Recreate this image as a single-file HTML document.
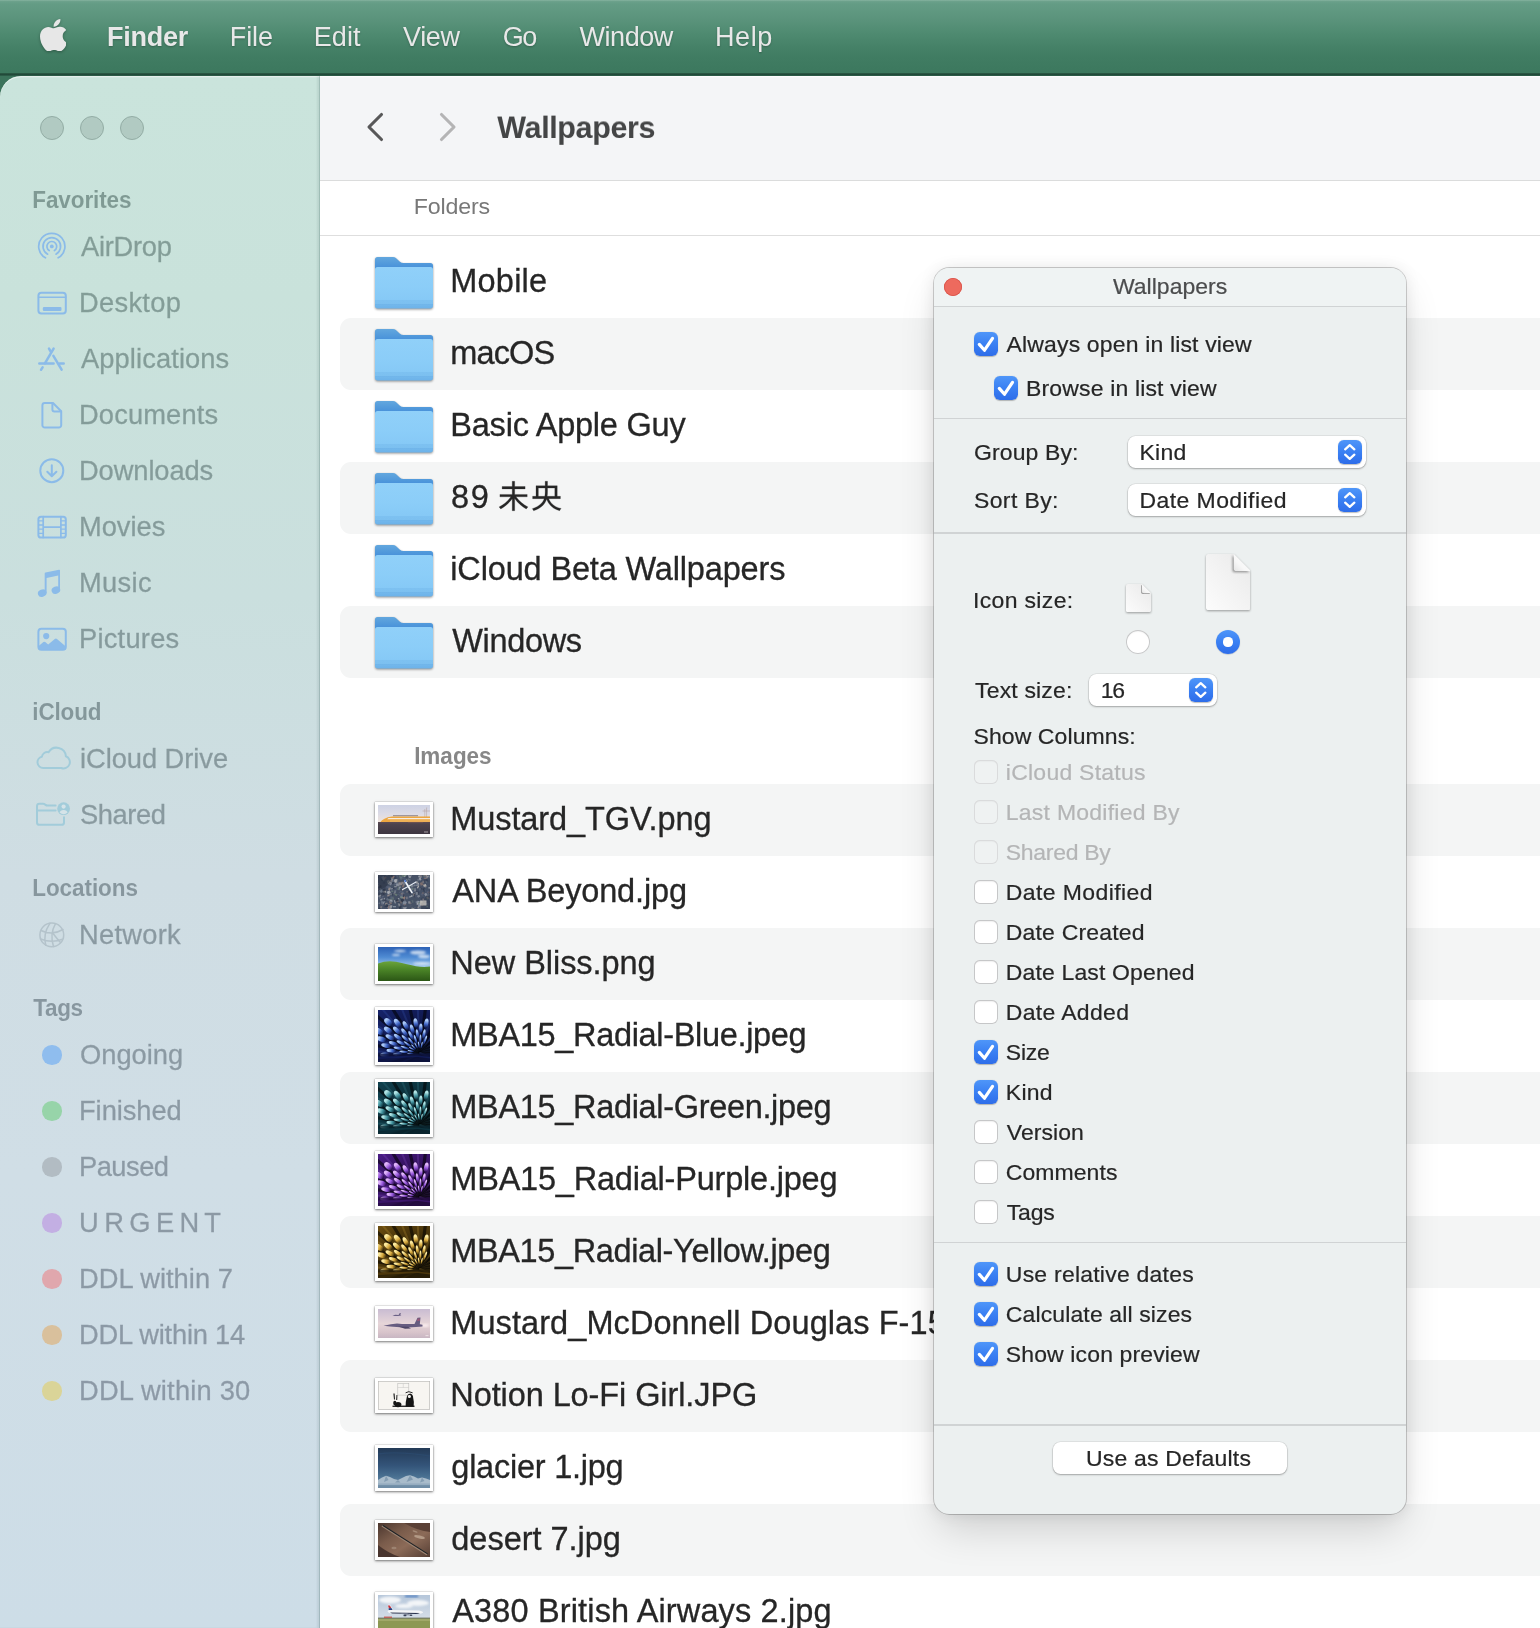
<!DOCTYPE html>
<html><head><meta charset="utf-8"><title>Finder</title><style>
*{box-sizing:border-box;margin:0;padding:0}
html,body{width:1540px;height:1628px;overflow:hidden;background:#3b735b}
#root{position:absolute;left:0;top:0;width:1540px;height:1628px;will-change:transform}
body{position:relative;font-family:"Liberation Sans",sans-serif;-webkit-font-smoothing:antialiased}
.a{position:absolute}
.t{position:absolute;white-space:nowrap;line-height:1;font-family:"Liberation Sans",sans-serif}
#menubar{left:0;top:0;width:1540px;height:75.5px;background:linear-gradient(180deg,#86b3a0 0px,#6aa08a 1.6px,#649c85 4px,#5a937b 20px,#4e8a70 34px,#468268 46px,#407c62 58px,#3c785e 72.6px,#2a5743 73.4px,#214839 74.6px,#2b5a46 75.5px)}
#sidebar{left:0;top:76px;width:320px;height:1552px;border-top-left-radius:21px;
 background:linear-gradient(180deg,#cae4dc 0px,#c9e2db 220px,#cadfde 520px,#cfdde3 800px,#d0dee6 1100px,#cddde7 1552px);
 box-shadow:inset -1px 0 0 rgba(0,45,40,.15), inset -3px 0 2px rgba(0,45,40,.07), inset 0 1.2px 0 rgba(255,255,255,.55)}
#sbtop{left:0;top:76px;width:320px;height:2px;border-top-left-radius:21px;background:rgba(255,255,255,.0)}
#toolbar{left:320px;top:76px;width:1220px;height:105px;background:#f4f5f7;border-bottom:1px solid #dbdcdc;box-shadow:inset 0 1.2px 0 rgba(255,255,255,.8)}
#content{left:320px;top:181px;width:1220px;height:1447px;background:#fff}
#hdrline{left:320px;top:235px;width:1220px;height:1px;background:#dedede}
.stripe{position:absolute;left:340px;width:1230px;height:72px;background:#f4f5f5;border-radius:11px}
.wb{position:absolute;top:116px;width:24px;height:24px;border-radius:50%;background:#b1cac2;border:1px solid #93ada5}
.dot{position:absolute;left:42px;width:19.5px;height:19.5px;border-radius:50%}

#panel{left:934.3px;top:267.8px;width:472.2px;height:1246.2px;border-radius:15.5px;background:#ecf0f0;
 box-shadow:0 0 0 .9px rgba(0,0,0,.2),0 20px 40px -6px rgba(0,0,0,.16),0 0 16px rgba(0,0,0,.085)}
#ptitle{left:934.3px;top:267.8px;width:472.2px;height:38.4px;border-radius:15.5px 15.5px 0 0;background:#eff3f3}
.sep{position:absolute;left:934.3px;width:472.2px;height:1.3px;background:#d0d3d4}
.cb{position:absolute;width:24px;height:24px;border-radius:5.8px}
.cb.on{background:linear-gradient(180deg,#4f96f9 0%,#3a80f3 50%,#2e6de9 100%);box-shadow:0 .5px 1px rgba(0,0,0,.25)}
.cb.off{background:#fff;box-shadow:inset 0 0 0 1px #c6c7c8,inset 0 1.5px 1.5px rgba(0,0,0,.10)}
.cb.dis{background:#eff2f2;box-shadow:inset 0 0 0 1px #dadbdc,inset 0 1.5px 1.5px rgba(0,0,0,.05)}
.dd{position:absolute;height:32px;border-radius:7.5px;background:#fff;box-shadow:0 0 0 .6px rgba(0,0,0,.10),0 1px 2px rgba(0,0,0,.28)}
.st{position:absolute;width:23.5px;height:24px;border-radius:5.8px;background:linear-gradient(180deg,#4f96f9 0%,#3a80f3 50%,#2e6de9 100%);box-shadow:0 .5px 1px rgba(0,0,0,.25)}
.rd{position:absolute;width:24px;height:24px;border-radius:50%}
</style></head>
<body>
<div id="root">
<div class="a" id="menubar"></div>
<svg class="a" style="left:39.5px;top:18.6px;filter:drop-shadow(0 1px 1.5px rgba(0,0,0,.3))" width="26.5" height="32.5" viewBox="4 32 367.4 448"><path fill="#e7e7e7" d="M318.7 268.7c-.2-36.700 16.400-64.400 50-84.800-18.800-26.900-47.200-41.700-84.700-44.600-35.500-2.800-74.300 20.700-88.500 20.700-15 0-49.400-19.700-76.400-19.700C63.300 141.200 4 184.800 4 273.500q0 39.300 14.400 81.200c12.800 36.700 59 126.700 107.200 125.200 25.200-.6 43-17.900 75.800-17.900 31.800 0 48.300 17.900 76.400 17.900 48.600-.7 90.400-82.500 102.600-119.300-65.200-30.700-61.700-90-61.700-91.900zm-56.600-164.200c27.300-32.400 24.800-61.900 24-72.500-24.100 1.400-52 16.400-67.900 34.900-17.500 19.800-27.800 44.300-25.600 71.900 26.100 2 49.900-11.400 69.500-34.300z"/></svg>
<div class="a" id="sidebar"></div>
<div class="a" id="toolbar"></div>
<div class="a" id="content"></div>
<div class="a" id="hdrline"></div>
<div class="wb" style="left:40px"></div>
<div class="wb" style="left:80px"></div>
<div class="wb" style="left:120px"></div>
<svg class="a" style="left:360px;top:106px" width="30" height="42" viewBox="0 0 30 42"><path d="M21.5 8.5 L9 21 L21.5 33.5" fill="none" stroke="#585859" stroke-width="3.1" stroke-linecap="round" stroke-linejoin="round"/></svg>
<svg class="a" style="left:433px;top:106px" width="30" height="42" viewBox="0 0 30 42"><path d="M8.5 8.5 L21 21 L8.5 33.5" fill="none" stroke="#b4b4b5" stroke-width="3.1" stroke-linecap="round" stroke-linejoin="round"/></svg>
<div class="stripe" style="top:318px"></div>
<div class="stripe" style="top:462px"></div>
<div class="stripe" style="top:606px"></div>
<div class="stripe" style="top:784px"></div>
<div class="stripe" style="top:928px"></div>
<div class="stripe" style="top:1072px"></div>
<div class="stripe" style="top:1216px"></div>
<div class="stripe" style="top:1360px"></div>
<div class="stripe" style="top:1504px"></div>
<div class="dot" style="top:1045.2px;background:#8fbdee"></div>
<div class="dot" style="top:1101.2px;background:#97d4a9"></div>
<div class="dot" style="top:1157.2px;background:#b2bcc3"></div>
<div class="dot" style="top:1213.2px;background:#c3afe3"></div>
<div class="dot" style="top:1269.2px;background:#e0a7ad"></div>
<div class="dot" style="top:1325.2px;background:#d9c09c"></div>
<div class="dot" style="top:1381.2px;background:#dad498"></div>
<svg class="a" style="left:0;top:0" width="320" height="1628" viewBox="0 0 320 1628" fill="none" stroke-linecap="round" stroke-linejoin="round">
<g stroke="#8bbbe9" stroke-width="1.7"><path d="M45.45 257.86 A13.10 13.10 0 1 1 58.15 257.86"/><path d="M47.67 254.17 A8.80 8.80 0 1 1 55.93 254.17"/><path d="M49.20 250.56 A4.90 4.90 0 1 1 54.40 250.56"/></g>
<circle cx="51.8" cy="246.4" r="1.9" fill="#8bbbe9"/>
<g stroke="#8bbbe9"><rect x="38.4" y="292.8" width="27.4" height="20.8" rx="3" stroke-width="2"/><path d="M38.6 297.3H65.6" stroke-width="1.5"/></g>
<rect x="42.8" y="306.9" width="18.7" height="4.1" rx="1.2" fill="#8bbbe9"/>
<g stroke="#8bbbe9" stroke-width="2.5"><path d="M39.3 363.6H53.6M59.6 363.6H63.7"/><path d="M53.6 348.6L44.9 363.3M42.6 367.3L41 369.8"/><path d="M49 348.6L51 352M53.4 355.9L61.6 369.6"/></g>
<g stroke="#8bbbe9" stroke-width="2"><path d="M44.8 403H53L61.2 411.2V425.2A2.4 2.4 0 0 1 58.8 427.6H44.8A2.4 2.4 0 0 1 42.4 425.2V405.4A2.4 2.4 0 0 1 44.8 403Z"/><path d="M52.4 403.3V409.4A2 2 0 0 0 54.4 411.4H61"/></g>
<g stroke="#8bbbe9" stroke-width="2"><circle cx="51.8" cy="470.7" r="11.5"/><path d="M51.8 465.2V476M47.3 471.7L51.8 476.3L56.4 471.7"/></g>
<g stroke="#8bbbe9"><rect x="38.4" y="516.7" width="27.4" height="20.8" rx="2.6" stroke-width="2"/><path d="M43.2 516.7V537.5M60.9 516.7V537.5M43.2 527.1H60.9" stroke-width="1.7"/><path d="M38.6 520.9H43M38.6 525H43M38.6 529.2H43M38.6 533.3H43M61 520.9H65.5M61 525H65.5M61 529.2H65.5M61 533.3H65.5" stroke-width="1.3"/></g>
<g fill="#8bbbe9" stroke="none"><ellipse cx="42.2" cy="593.2" rx="4.4" ry="3.6" transform="rotate(-22 42.2 593.2)"/><ellipse cx="55.9" cy="590.2" rx="4.4" ry="3.6" transform="rotate(-22 55.9 590.2)"/><path d="M44.7 573.4Q44.7 572.6 45.5 572.4L59 569.7Q60 569.5 60 570.5V590.4H58.2V575.5L46.6 577.9V593.2H44.7Z"/></g>
<rect x="38.4" y="628.7" width="27.4" height="21.1" rx="3" stroke="#8bbbe9" stroke-width="2"/>
<g fill="#8bbbe9" stroke="none"><circle cx="46.2" cy="636.1" r="3.1"/><path d="M38.4 646.3L43.4 642Q44.3 641.3 45.2 642L48.2 644.6L54.8 638.9Q55.9 638 57 638.9L65.8 646.4V648.5Q65.8 649.8 64.5 649.8H39.7Q38.4 649.8 38.4 648.5Z"/></g>
<path stroke="#a2ccda" stroke-width="2" d="M43.2 768A5.7 5.7 0 0 1 41.9 756.75A5.3 5.3 0 0 1 48.6 752.3A9.3 9.3 0 0 1 65.9 756.3A6 6 0 0 1 61.2 768Z"/>
<g stroke="#a2ccda" stroke-width="2"><path d="M55.6 805.6H47.5Q46.4 805.6 45.5 804.9L44.6 804.2Q44 803.8 43 803.8H39.4A2.4 2.4 0 0 0 37 806.2V822.4A2.4 2.4 0 0 0 39.4 824.8H61.6A2.4 2.4 0 0 0 64 822.4V817.2"/><path d="M37.2 810.6H55.6"/></g>
<circle cx="63.6" cy="808.7" r="6.4" fill="#a2ccda"/>
<g fill="#d5e3e8"><circle cx="63.6" cy="806.6" r="2.1"/><path d="M59.6 812.6Q60.3 809.9 63.6 809.9Q66.9 809.9 67.6 812.6Q65.8 814.2 63.6 814.2Q61.4 814.2 59.6 812.6Z"/></g>
<g stroke="#b4c3cb" stroke-width="1.5"><circle cx="51.8" cy="934.9" r="11.9"/><path d="M55.5 923.6Q49.5 934 53.5 946.6M50 923.2Q42.5 934.5 45.8 945.2M41 930.5Q52 936 63 929.5M40.5 939Q52 943.5 62.5 939.2M53.5 934Q58 940 60.5 942.5"/></g>
</svg>
<svg width="0" height="0" style="position:absolute"><defs>
<linearGradient id="fb" x1="0" y1="0" x2="0" y2="1"><stop offset="0" stop-color="#62a7de"/><stop offset="0.45" stop-color="#4a93da"/><stop offset="1" stop-color="#3a80d0"/></linearGradient>
<linearGradient id="ff" x1="0" y1="0" x2="0" y2="1"><stop offset="0" stop-color="#90d0f9"/><stop offset="0.5" stop-color="#8bcdf8"/><stop offset="0.79" stop-color="#86c9f6"/><stop offset="0.8" stop-color="#7dc1f1"/><stop offset="0.89" stop-color="#7cc0f0"/><stop offset="0.9" stop-color="#6db2e8"/><stop offset="0.91" stop-color="#73b8ec"/><stop offset="1" stop-color="#6cb2e9"/></linearGradient>
</defs></svg>
<svg class="a" style="left:375px;top:257px;filter:drop-shadow(0 1px 1.2px rgba(0,0,0,.42))" width="58" height="52" viewBox="0 0 58 52"><path fill="url(#fb)" d="M0 2.6Q0 0 2.6 0H18Q19.6 0 20.9 1.1L24.6 4.6Q26.3 6.1 28.6 6.1H55.4Q58 6.1 58 8.7V22H0Z"/><rect x="0" y="10.1" width="58" height="41.3" rx="2.6" fill="url(#ff)"/></svg>
<svg class="a" style="left:375px;top:329px;filter:drop-shadow(0 1px 1.2px rgba(0,0,0,.42))" width="58" height="52" viewBox="0 0 58 52"><path fill="url(#fb)" d="M0 2.6Q0 0 2.6 0H18Q19.6 0 20.9 1.1L24.6 4.6Q26.3 6.1 28.6 6.1H55.4Q58 6.1 58 8.7V22H0Z"/><rect x="0" y="10.1" width="58" height="41.3" rx="2.6" fill="url(#ff)"/></svg>
<svg class="a" style="left:375px;top:401px;filter:drop-shadow(0 1px 1.2px rgba(0,0,0,.42))" width="58" height="52" viewBox="0 0 58 52"><path fill="url(#fb)" d="M0 2.6Q0 0 2.6 0H18Q19.6 0 20.9 1.1L24.6 4.6Q26.3 6.1 28.6 6.1H55.4Q58 6.1 58 8.7V22H0Z"/><rect x="0" y="10.1" width="58" height="41.3" rx="2.6" fill="url(#ff)"/></svg>
<svg class="a" style="left:375px;top:473px;filter:drop-shadow(0 1px 1.2px rgba(0,0,0,.42))" width="58" height="52" viewBox="0 0 58 52"><path fill="url(#fb)" d="M0 2.6Q0 0 2.6 0H18Q19.6 0 20.9 1.1L24.6 4.6Q26.3 6.1 28.6 6.1H55.4Q58 6.1 58 8.7V22H0Z"/><rect x="0" y="10.1" width="58" height="41.3" rx="2.6" fill="url(#ff)"/></svg>
<svg class="a" style="left:375px;top:545px;filter:drop-shadow(0 1px 1.2px rgba(0,0,0,.42))" width="58" height="52" viewBox="0 0 58 52"><path fill="url(#fb)" d="M0 2.6Q0 0 2.6 0H18Q19.6 0 20.9 1.1L24.6 4.6Q26.3 6.1 28.6 6.1H55.4Q58 6.1 58 8.7V22H0Z"/><rect x="0" y="10.1" width="58" height="41.3" rx="2.6" fill="url(#ff)"/></svg>
<svg class="a" style="left:375px;top:617px;filter:drop-shadow(0 1px 1.2px rgba(0,0,0,.42))" width="58" height="52" viewBox="0 0 58 52"><path fill="url(#fb)" d="M0 2.6Q0 0 2.6 0H18Q19.6 0 20.9 1.1L24.6 4.6Q26.3 6.1 28.6 6.1H55.4Q58 6.1 58 8.7V22H0Z"/><rect x="0" y="10.1" width="58" height="41.3" rx="2.6" fill="url(#ff)"/></svg>
<div class="a" style="left:375px;top:802.0px;width:58px;height:35.0px;background:#fff;box-shadow:0 1px 2.5px rgba(0,0,0,.5),0 0 1px rgba(0,0,0,.35)"><svg class="a" style="left:3px;top:3px" width="52" height="29.0" viewBox="0 0 52 29.0" preserveAspectRatio="none"><defs><linearGradient id="t1" x1="0" y1="0" x2="0" y2="1"><stop offset="0" stop-color="#cdd2e4"/><stop offset="0.3" stop-color="#dcdbe6"/><stop offset="0.58" stop-color="#eee3dc"/><stop offset="0.59" stop-color="#514650"/><stop offset="1" stop-color="#3d3540"/></linearGradient><filter id="tb"><feGaussianBlur stdDeviation=".35"/></filter></defs><rect width="52" height="29" fill="url(#t1)"/><g filter="url(#tb)"><path d="M46.8 4V17M48.6 2.5V17M44.5 6H52" stroke="#b09a98" stroke-width=".5" fill="none"/><path d="M15 10.2H40V11.3H15Z" fill="#8f858d"/><path d="M2.6 16.8Q3.5 15.4 6.5 13.8Q9.5 11.9 14 11.4H52V17.1H2.8Z" fill="#eda63f"/><path d="M10.5 12.9H52V14.3H9.2Z" fill="#f6ede2"/><path d="M12 15.7H52V16.3H12Z" fill="#f9deb0" opacity=".85"/><path d="M30 16.9H45V17.6H30Z" fill="#e08a3a" opacity=".7"/></g><rect x="0" y="17.3" width="52" height="1" fill="#5f4c56"/><rect x="46" y="26.6" width="4" height=".8" fill="#d9d2d6" opacity=".8"/></svg></div>
<div class="a" style="left:375px;top:871.5px;width:58px;height:40.5px;background:#fff;box-shadow:0 1px 2.5px rgba(0,0,0,.5),0 0 1px rgba(0,0,0,.35)"><svg class="a" style="left:3px;top:3px" width="52" height="34.5" viewBox="0 0 52 34.5" preserveAspectRatio="none"><defs><filter id="anb"><feGaussianBlur stdDeviation=".3"/></filter></defs><rect width="52" height="34.5" fill="#465165"/><g filter="url(#anb)"><rect x="22.5" y="18.6" width="3.0" height="2.1" fill="#8d7670" opacity="0.83" transform="rotate(-20 22.5 18.6)"/><rect x="8.6" y="16.9" width="2.4" height="2.9" fill="#8b94a3" opacity="0.65" transform="rotate(-20 8.6 16.9)"/><rect x="3.7" y="27.3" width="2.5" height="1.1" fill="#b9bbbf" opacity="0.88" transform="rotate(25 3.7 27.3)"/><rect x="32.8" y="20.8" width="2.8" height="1.2" fill="#6d7889" opacity="0.54" transform="rotate(-20 32.8 20.8)"/><rect x="30.2" y="26.2" width="1.7" height="2.4" fill="#a0a5ae" opacity="0.68" transform="rotate(0 30.2 26.2)"/><rect x="25.0" y="22.2" width="2.0" height="1.7" fill="#8d7670" opacity="0.90" transform="rotate(-30 25.0 22.2)"/><rect x="35.8" y="10.0" width="1.5" height="1.7" fill="#8b94a3" opacity="0.70" transform="rotate(-30 35.8 10.0)"/><rect x="19.8" y="28.6" width="1.9" height="3.3" fill="#c5c3bd" opacity="0.45" transform="rotate(-20 19.8 28.6)"/><rect x="47.2" y="0.8" width="1.8" height="2.7" fill="#b9bbbf" opacity="0.48" transform="rotate(-20 47.2 0.8)"/><rect x="39.5" y="8.4" width="1.2" height="1.8" fill="#b9bbbf" opacity="0.79" transform="rotate(-30 39.5 8.4)"/><rect x="6.0" y="23.7" width="1.0" height="2.1" fill="#5a6478" opacity="0.53" transform="rotate(25 6.0 23.7)"/><rect x="8.8" y="16.8" width="3.2" height="2.8" fill="#b9bbbf" opacity="0.74" transform="rotate(-30 8.8 16.8)"/><rect x="19.5" y="33.7" width="1.0" height="3.1" fill="#9a8f8c" opacity="0.72" transform="rotate(-30 19.5 33.7)"/><rect x="10.0" y="12.8" width="2.9" height="2.5" fill="#8b94a3" opacity="0.47" transform="rotate(-20 10.0 12.8)"/><rect x="10.1" y="8.0" width="2.7" height="1.8" fill="#2b3345" opacity="0.62" transform="rotate(-30 10.1 8.0)"/><rect x="3.7" y="19.4" width="1.5" height="2.4" fill="#76808f" opacity="0.73" transform="rotate(-20 3.7 19.4)"/><rect x="48.9" y="15.9" width="2.3" height="3.1" fill="#56617a" opacity="0.73" transform="rotate(0 48.9 15.9)"/><rect x="46.2" y="27.6" width="1.5" height="1.5" fill="#323b50" opacity="0.73" transform="rotate(25 46.2 27.6)"/><rect x="9.2" y="32.3" width="2.9" height="2.4" fill="#b9bbbf" opacity="0.47" transform="rotate(-30 9.2 32.3)"/><rect x="1.0" y="32.7" width="1.5" height="2.7" fill="#2b3345" opacity="0.64" transform="rotate(25 1.0 32.7)"/><rect x="24.5" y="17.2" width="3.0" height="3.3" fill="#56617a" opacity="0.55" transform="rotate(25 24.5 17.2)"/><rect x="33.0" y="20.6" width="1.2" height="1.5" fill="#a0a5ae" opacity="0.79" transform="rotate(-30 33.0 20.6)"/><rect x="13.0" y="14.6" width="1.1" height="1.4" fill="#76808f" opacity="0.69" transform="rotate(-20 13.0 14.6)"/><rect x="3.8" y="3.8" width="2.0" height="1.8" fill="#323b50" opacity="0.76" transform="rotate(25 3.8 3.8)"/><rect x="48.2" y="19.6" width="3.0" height="2.1" fill="#76808f" opacity="0.77" transform="rotate(-30 48.2 19.6)"/><rect x="0.1" y="21.3" width="2.1" height="2.8" fill="#76808f" opacity="0.51" transform="rotate(-30 0.1 21.3)"/><rect x="2.9" y="18.1" width="2.6" height="3.2" fill="#323b50" opacity="0.78" transform="rotate(-20 2.9 18.1)"/><rect x="40.2" y="31.0" width="1.8" height="2.6" fill="#8b94a3" opacity="0.84" transform="rotate(15 40.2 31.0)"/><rect x="48.1" y="0.1" width="2.1" height="1.0" fill="#c5c3bd" opacity="0.62" transform="rotate(25 48.1 0.1)"/><rect x="-0.4" y="1.5" width="1.2" height="1.3" fill="#2b3345" opacity="0.85" transform="rotate(0 -0.4 1.5)"/><rect x="19.2" y="24.7" width="2.3" height="2.1" fill="#8d7670" opacity="0.49" transform="rotate(25 19.2 24.7)"/><rect x="0.5" y="20.0" width="2.1" height="1.6" fill="#323b50" opacity="0.50" transform="rotate(25 0.5 20.0)"/><rect x="33.3" y="16.0" width="3.0" height="1.9" fill="#56617a" opacity="0.76" transform="rotate(-20 33.3 16.0)"/><rect x="26.0" y="25.4" width="1.8" height="3.2" fill="#5a6478" opacity="0.85" transform="rotate(0 26.0 25.4)"/><rect x="20.0" y="7.8" width="2.4" height="2.9" fill="#9a8f8c" opacity="0.86" transform="rotate(-20 20.0 7.8)"/><rect x="19.0" y="19.4" width="1.7" height="1.3" fill="#5a6478" opacity="0.61" transform="rotate(-30 19.0 19.4)"/><rect x="36.0" y="32.3" width="1.6" height="1.4" fill="#5a6478" opacity="0.66" transform="rotate(-20 36.0 32.3)"/><rect x="42.2" y="12.4" width="2.1" height="2.6" fill="#323b50" opacity="0.83" transform="rotate(25 42.2 12.4)"/><rect x="22.5" y="1.6" width="1.1" height="3.1" fill="#6d7889" opacity="0.76" transform="rotate(0 22.5 1.6)"/><rect x="28.7" y="9.8" width="2.7" height="1.0" fill="#56617a" opacity="0.63" transform="rotate(-20 28.7 9.8)"/><rect x="0.3" y="28.0" width="1.5" height="1.3" fill="#6d7889" opacity="0.89" transform="rotate(-30 0.3 28.0)"/><rect x="22.2" y="21.0" width="2.4" height="2.9" fill="#8b94a3" opacity="0.76" transform="rotate(-20 22.2 21.0)"/><rect x="41.8" y="8.0" width="2.6" height="2.8" fill="#8d7670" opacity="0.77" transform="rotate(-20 41.8 8.0)"/><rect x="10.8" y="26.3" width="2.2" height="3.3" fill="#8d7670" opacity="0.73" transform="rotate(-20 10.8 26.3)"/><rect x="19.5" y="26.7" width="3.0" height="1.2" fill="#323b50" opacity="0.62" transform="rotate(15 19.5 26.7)"/><rect x="22.6" y="20.9" width="3.0" height="1.9" fill="#74897a" opacity="0.74" transform="rotate(25 22.6 20.9)"/><rect x="40.4" y="32.0" width="2.0" height="2.6" fill="#a0a5ae" opacity="0.49" transform="rotate(-30 40.4 32.0)"/><rect x="10.1" y="30.5" width="3.2" height="3.3" fill="#8d7670" opacity="0.89" transform="rotate(0 10.1 30.5)"/><rect x="12.6" y="24.1" width="1.0" height="2.2" fill="#6d7889" opacity="0.65" transform="rotate(25 12.6 24.1)"/><rect x="20.9" y="8.6" width="3.0" height="1.5" fill="#8b94a3" opacity="0.64" transform="rotate(-30 20.9 8.6)"/><rect x="8.0" y="10.7" width="2.7" height="1.3" fill="#56617a" opacity="0.90" transform="rotate(25 8.0 10.7)"/><rect x="42.7" y="23.1" width="3.1" height="2.2" fill="#323b50" opacity="0.49" transform="rotate(-20 42.7 23.1)"/><rect x="21.8" y="18.6" width="2.8" height="2.3" fill="#56617a" opacity="0.69" transform="rotate(25 21.8 18.6)"/><rect x="12.3" y="22.5" width="3.1" height="3.1" fill="#74897a" opacity="0.54" transform="rotate(-20 12.3 22.5)"/><rect x="49.4" y="17.3" width="2.3" height="1.5" fill="#8d7670" opacity="0.50" transform="rotate(-30 49.4 17.3)"/><rect x="30.5" y="-0.0" width="3.1" height="2.2" fill="#b9bbbf" opacity="0.69" transform="rotate(25 30.5 -0.0)"/><rect x="5.3" y="2.3" width="1.4" height="3.2" fill="#5a6478" opacity="0.64" transform="rotate(15 5.3 2.3)"/><rect x="13.0" y="15.6" width="1.3" height="2.0" fill="#5a6478" opacity="0.69" transform="rotate(-30 13.0 15.6)"/><rect x="9.0" y="20.6" width="3.0" height="1.3" fill="#9a8f8c" opacity="0.89" transform="rotate(-30 9.0 20.6)"/><rect x="9.1" y="7.0" width="2.5" height="1.8" fill="#76808f" opacity="0.56" transform="rotate(15 9.1 7.0)"/><rect x="4.5" y="24.6" width="1.3" height="2.2" fill="#2b3345" opacity="0.77" transform="rotate(25 4.5 24.6)"/><rect x="44.7" y="-0.2" width="2.4" height="3.0" fill="#74897a" opacity="0.52" transform="rotate(-20 44.7 -0.2)"/><rect x="43.9" y="17.7" width="1.5" height="1.5" fill="#8d7670" opacity="0.73" transform="rotate(-20 43.9 17.7)"/><rect x="11.1" y="24.9" width="2.8" height="3.2" fill="#76808f" opacity="0.72" transform="rotate(-20 11.1 24.9)"/><rect x="10.3" y="33.9" width="3.0" height="1.3" fill="#a0a5ae" opacity="0.51" transform="rotate(-30 10.3 33.9)"/><rect x="12.5" y="2.4" width="2.8" height="2.0" fill="#9a8f8c" opacity="0.77" transform="rotate(-20 12.5 2.4)"/><rect x="19.9" y="23.0" width="1.0" height="1.5" fill="#c5c3bd" opacity="0.61" transform="rotate(0 19.9 23.0)"/><rect x="5.0" y="16.7" width="2.7" height="2.2" fill="#c5c3bd" opacity="0.82" transform="rotate(-30 5.0 16.7)"/><rect x="24.1" y="-0.1" width="2.7" height="2.5" fill="#74897a" opacity="0.67" transform="rotate(-20 24.1 -0.1)"/><rect x="8.6" y="6.1" width="2.8" height="3.4" fill="#c5c3bd" opacity="0.49" transform="rotate(-30 8.6 6.1)"/><rect x="6.0" y="22.8" width="1.2" height="1.2" fill="#b9bbbf" opacity="0.66" transform="rotate(25 6.0 22.8)"/><rect x="17.4" y="6.4" width="1.8" height="2.5" fill="#6d7889" opacity="0.83" transform="rotate(-20 17.4 6.4)"/><rect x="20.2" y="11.6" width="1.8" height="3.2" fill="#74897a" opacity="0.52" transform="rotate(25 20.2 11.6)"/><rect x="40.2" y="10.3" width="1.2" height="3.0" fill="#c5c3bd" opacity="0.87" transform="rotate(25 40.2 10.3)"/><rect x="30.2" y="16.7" width="3.2" height="2.9" fill="#2b3345" opacity="0.58" transform="rotate(-30 30.2 16.7)"/><rect x="37.7" y="26.2" width="2.8" height="2.0" fill="#76808f" opacity="0.85" transform="rotate(0 37.7 26.2)"/><rect x="38.9" y="25.8" width="1.9" height="2.7" fill="#8b94a3" opacity="0.81" transform="rotate(0 38.9 25.8)"/><rect x="23.4" y="-0.6" width="1.8" height="2.5" fill="#74897a" opacity="0.47" transform="rotate(0 23.4 -0.6)"/><rect x="48.1" y="22.3" width="1.7" height="2.6" fill="#74897a" opacity="0.53" transform="rotate(-30 48.1 22.3)"/><rect x="19.3" y="34.0" width="2.4" height="2.7" fill="#9a8f8c" opacity="0.63" transform="rotate(25 19.3 34.0)"/><rect x="0.2" y="20.5" width="2.6" height="1.6" fill="#b9bbbf" opacity="0.68" transform="rotate(-20 0.2 20.5)"/><rect x="32.7" y="-0.6" width="1.6" height="1.7" fill="#76808f" opacity="0.70" transform="rotate(25 32.7 -0.6)"/><rect x="20.6" y="17.2" width="2.9" height="1.2" fill="#5a6478" opacity="0.81" transform="rotate(-30 20.6 17.2)"/><rect x="27.6" y="22.4" width="3.1" height="1.9" fill="#56617a" opacity="0.62" transform="rotate(-20 27.6 22.4)"/><rect x="43.5" y="18.0" width="2.3" height="2.0" fill="#5a6478" opacity="0.64" transform="rotate(25 43.5 18.0)"/><rect x="19.7" y="9.9" width="2.2" height="2.2" fill="#2b3345" opacity="0.70" transform="rotate(0 19.7 9.9)"/><rect x="33.5" y="25.2" width="1.1" height="2.9" fill="#74897a" opacity="0.47" transform="rotate(-20 33.5 25.2)"/><rect x="20.3" y="23.0" width="1.1" height="1.8" fill="#b9bbbf" opacity="0.47" transform="rotate(0 20.3 23.0)"/><rect x="2.8" y="30.7" width="1.9" height="2.1" fill="#9a8f8c" opacity="0.56" transform="rotate(25 2.8 30.7)"/><rect x="4.1" y="27.4" width="3.0" height="1.3" fill="#a0a5ae" opacity="0.72" transform="rotate(-30 4.1 27.4)"/><rect x="1.6" y="13.6" width="1.3" height="3.1" fill="#76808f" opacity="0.69" transform="rotate(-30 1.6 13.6)"/><rect x="17.9" y="3.9" width="1.9" height="2.4" fill="#c5c3bd" opacity="0.71" transform="rotate(15 17.9 3.9)"/><rect x="17.9" y="25.0" width="2.8" height="1.3" fill="#2b3345" opacity="0.78" transform="rotate(-20 17.9 25.0)"/><rect x="24.0" y="16.6" width="1.7" height="2.2" fill="#76808f" opacity="0.57" transform="rotate(25 24.0 16.6)"/><rect x="34.6" y="18.8" width="2.3" height="2.5" fill="#9a8f8c" opacity="0.56" transform="rotate(-20 34.6 18.8)"/><rect x="25.1" y="21.9" width="1.4" height="2.6" fill="#c5c3bd" opacity="0.48" transform="rotate(0 25.1 21.9)"/><rect x="12.5" y="-0.1" width="1.1" height="1.5" fill="#2b3345" opacity="0.48" transform="rotate(-30 12.5 -0.1)"/><rect x="46.5" y="4.6" width="1.5" height="3.4" fill="#5a6478" opacity="0.67" transform="rotate(-20 46.5 4.6)"/><rect x="16.6" y="16.3" width="1.3" height="3.1" fill="#9a8f8c" opacity="0.50" transform="rotate(25 16.6 16.3)"/><rect x="42.6" y="25.9" width="2.0" height="2.8" fill="#b9bbbf" opacity="0.81" transform="rotate(0 42.6 25.9)"/><rect x="7.0" y="28.3" width="2.3" height="1.7" fill="#9a8f8c" opacity="0.79" transform="rotate(-20 7.0 28.3)"/><rect x="21.2" y="11.9" width="1.2" height="3.1" fill="#8b94a3" opacity="0.69" transform="rotate(15 21.2 11.9)"/><rect x="28.3" y="16.0" width="2.5" height="1.7" fill="#9a8f8c" opacity="0.45" transform="rotate(0 28.3 16.0)"/><rect x="10.1" y="22.2" width="1.2" height="1.7" fill="#323b50" opacity="0.79" transform="rotate(0 10.1 22.2)"/><rect x="13.7" y="4.0" width="1.8" height="2.7" fill="#76808f" opacity="0.86" transform="rotate(0 13.7 4.0)"/><rect x="35.9" y="18.9" width="3.0" height="3.3" fill="#2b3345" opacity="0.65" transform="rotate(0 35.9 18.9)"/><rect x="22.8" y="6.7" width="3.1" height="2.8" fill="#8d7670" opacity="0.56" transform="rotate(0 22.8 6.7)"/><rect x="42.1" y="-0.2" width="2.5" height="2.4" fill="#9a8f8c" opacity="0.54" transform="rotate(25 42.1 -0.2)"/><rect x="18.1" y="12.7" width="1.3" height="2.4" fill="#56617a" opacity="0.53" transform="rotate(15 18.1 12.7)"/><rect x="44.8" y="8.9" width="1.0" height="2.2" fill="#8d7670" opacity="0.52" transform="rotate(0 44.8 8.9)"/><rect x="49.3" y="21.8" width="2.8" height="1.2" fill="#8d7670" opacity="0.59" transform="rotate(25 49.3 21.8)"/><rect x="3.4" y="1.9" width="2.6" height="3.2" fill="#8b94a3" opacity="0.46" transform="rotate(-20 3.4 1.9)"/><rect x="4.1" y="27.6" width="1.9" height="2.7" fill="#5a6478" opacity="0.79" transform="rotate(25 4.1 27.6)"/><rect x="16.6" y="15.1" width="1.8" height="2.9" fill="#76808f" opacity="0.75" transform="rotate(15 16.6 15.1)"/><rect x="24.4" y="27.2" width="1.2" height="2.5" fill="#6d7889" opacity="0.63" transform="rotate(0 24.4 27.2)"/><rect x="43.4" y="27.2" width="2.8" height="3.1" fill="#8d7670" opacity="0.74" transform="rotate(25 43.4 27.2)"/><rect x="17.8" y="-0.6" width="1.2" height="3.2" fill="#56617a" opacity="0.56" transform="rotate(-20 17.8 -0.6)"/><rect x="50.5" y="12.1" width="1.4" height="1.5" fill="#b9bbbf" opacity="0.69" transform="rotate(0 50.5 12.1)"/><rect x="49.4" y="1.1" width="1.7" height="1.3" fill="#c5c3bd" opacity="0.52" transform="rotate(-20 49.4 1.1)"/><rect x="46.4" y="25.4" width="1.0" height="2.2" fill="#9a8f8c" opacity="0.47" transform="rotate(-30 46.4 25.4)"/><rect x="9.3" y="11.6" width="2.3" height="2.4" fill="#5a6478" opacity="0.72" transform="rotate(-20 9.3 11.6)"/><rect x="22.0" y="30.3" width="1.9" height="3.2" fill="#2b3345" opacity="0.73" transform="rotate(25 22.0 30.3)"/><rect x="23.9" y="8.1" width="3.0" height="3.2" fill="#76808f" opacity="0.75" transform="rotate(-30 23.9 8.1)"/><rect x="24.1" y="6.7" width="1.1" height="3.3" fill="#9a8f8c" opacity="0.81" transform="rotate(25 24.1 6.7)"/><rect x="40.3" y="26.1" width="2.7" height="1.1" fill="#a0a5ae" opacity="0.85" transform="rotate(15 40.3 26.1)"/><rect x="46.1" y="14.8" width="1.5" height="2.0" fill="#56617a" opacity="0.64" transform="rotate(0 46.1 14.8)"/><rect x="6.5" y="30.8" width="2.8" height="1.3" fill="#323b50" opacity="0.90" transform="rotate(0 6.5 30.8)"/><rect x="25.8" y="0.9" width="2.3" height="1.4" fill="#a0a5ae" opacity="0.82" transform="rotate(-20 25.8 0.9)"/><rect x="41.7" y="1.9" width="1.6" height="2.7" fill="#8b94a3" opacity="0.85" transform="rotate(15 41.7 1.9)"/><rect x="3.3" y="25.2" width="2.2" height="2.2" fill="#6d7889" opacity="0.81" transform="rotate(15 3.3 25.2)"/><rect x="9.0" y="22.9" width="2.7" height="2.1" fill="#6d7889" opacity="0.69" transform="rotate(25 9.0 22.9)"/><rect x="24.7" y="32.1" width="3.1" height="1.8" fill="#b9bbbf" opacity="0.48" transform="rotate(0 24.7 32.1)"/><rect x="50.9" y="22.4" width="1.1" height="1.2" fill="#56617a" opacity="0.50" transform="rotate(15 50.9 22.4)"/><rect x="34.1" y="25.1" width="2.7" height="1.3" fill="#5a6478" opacity="0.46" transform="rotate(15 34.1 25.1)"/><rect x="36.0" y="15.6" width="1.6" height="1.3" fill="#9a8f8c" opacity="0.45" transform="rotate(-20 36.0 15.6)"/><rect x="45.9" y="4.3" width="2.4" height="3.2" fill="#323b50" opacity="0.58" transform="rotate(0 45.9 4.3)"/><rect x="38.3" y="18.4" width="1.2" height="1.5" fill="#b9bbbf" opacity="0.78" transform="rotate(0 38.3 18.4)"/><rect x="15.1" y="8.6" width="2.0" height="2.5" fill="#5a6478" opacity="0.82" transform="rotate(-30 15.1 8.6)"/><rect x="4.3" y="20.8" width="1.3" height="2.5" fill="#56617a" opacity="0.53" transform="rotate(15 4.3 20.8)"/><rect x="0.9" y="15.2" width="2.5" height="1.2" fill="#6d7889" opacity="0.52" transform="rotate(-30 0.9 15.2)"/><rect x="21.6" y="26.0" width="1.8" height="3.0" fill="#8d7670" opacity="0.51" transform="rotate(-20 21.6 26.0)"/><rect x="38.9" y="27.7" width="1.8" height="1.8" fill="#b9bbbf" opacity="0.73" transform="rotate(15 38.9 27.7)"/><rect x="30.9" y="10.1" width="2.7" height="1.6" fill="#74897a" opacity="0.69" transform="rotate(0 30.9 10.1)"/><rect x="16.2" y="11.0" width="2.4" height="1.3" fill="#b9bbbf" opacity="0.54" transform="rotate(0 16.2 11.0)"/><rect x="40.0" y="27.9" width="2.3" height="1.4" fill="#9a8f8c" opacity="0.69" transform="rotate(0 40.0 27.9)"/><rect x="27.5" y="11.3" width="2.1" height="1.3" fill="#323b50" opacity="0.54" transform="rotate(25 27.5 11.3)"/><rect x="50.9" y="23.7" width="3.1" height="2.4" fill="#6d7889" opacity="0.73" transform="rotate(-20 50.9 23.7)"/><rect x="39.4" y="3.8" width="2.1" height="2.0" fill="#76808f" opacity="0.60" transform="rotate(0 39.4 3.8)"/><rect x="12.8" y="29.9" width="2.0" height="2.8" fill="#a0a5ae" opacity="0.86" transform="rotate(25 12.8 29.9)"/><rect x="27.4" y="1.2" width="3.0" height="1.4" fill="#323b50" opacity="0.90" transform="rotate(0 27.4 1.2)"/><rect x="30.3" y="3.3" width="2.8" height="1.7" fill="#76808f" opacity="0.56" transform="rotate(25 30.3 3.3)"/><rect x="17.9" y="4.8" width="2.3" height="2.9" fill="#5a6478" opacity="0.46" transform="rotate(-20 17.9 4.8)"/><rect x="39.7" y="31.5" width="3.2" height="1.3" fill="#9a8f8c" opacity="0.75" transform="rotate(15 39.7 31.5)"/><rect x="31.0" y="21.4" width="2.7" height="1.4" fill="#b9bbbf" opacity="0.66" transform="rotate(-20 31.0 21.4)"/><rect x="26.4" y="3.1" width="1.9" height="1.8" fill="#56617a" opacity="0.57" transform="rotate(25 26.4 3.1)"/><rect x="47.4" y="0.9" width="2.7" height="2.7" fill="#9a8f8c" opacity="0.52" transform="rotate(15 47.4 0.9)"/><rect x="30.2" y="15.4" width="1.9" height="2.5" fill="#323b50" opacity="0.70" transform="rotate(15 30.2 15.4)"/><rect x="38.1" y="16.0" width="3.2" height="3.0" fill="#323b50" opacity="0.63" transform="rotate(15 38.1 16.0)"/><rect x="5.1" y="3.0" width="3.1" height="1.8" fill="#8d7670" opacity="0.64" transform="rotate(-30 5.1 3.0)"/><rect x="15.7" y="0.9" width="2.6" height="3.2" fill="#323b50" opacity="0.62" transform="rotate(0 15.7 0.9)"/><rect x="38.1" y="9.7" width="2.3" height="1.2" fill="#8b94a3" opacity="0.83" transform="rotate(-20 38.1 9.7)"/><rect x="25.1" y="12.9" width="1.1" height="2.7" fill="#8d7670" opacity="0.86" transform="rotate(25 25.1 12.9)"/><rect x="14.9" y="12.8" width="1.5" height="1.2" fill="#323b50" opacity="0.88" transform="rotate(0 14.9 12.8)"/><rect x="44.1" y="13.7" width="2.8" height="1.5" fill="#323b50" opacity="0.64" transform="rotate(-30 44.1 13.7)"/><rect x="46.0" y="2.4" width="2.7" height="1.3" fill="#8d7670" opacity="0.71" transform="rotate(15 46.0 2.4)"/><rect x="-1.0" y="7.5" width="1.7" height="1.8" fill="#8b94a3" opacity="0.65" transform="rotate(15 -1.0 7.5)"/><rect x="41.4" y="12.9" width="1.8" height="2.4" fill="#6d7889" opacity="0.59" transform="rotate(15 41.4 12.9)"/><rect x="45.7" y="9.8" width="2.1" height="3.2" fill="#9a8f8c" opacity="0.66" transform="rotate(-20 45.7 9.8)"/><rect x="9.5" y="29.1" width="2.5" height="1.1" fill="#76808f" opacity="0.83" transform="rotate(0 9.5 29.1)"/><rect x="45.8" y="-0.4" width="2.4" height="2.7" fill="#8d7670" opacity="0.54" transform="rotate(-20 45.8 -0.4)"/><rect x="9.0" y="29.8" width="1.1" height="1.3" fill="#323b50" opacity="0.82" transform="rotate(0 9.0 29.8)"/><rect x="44.2" y="24.0" width="1.3" height="2.7" fill="#9a8f8c" opacity="0.65" transform="rotate(-30 44.2 24.0)"/><rect x="7.8" y="29.2" width="1.3" height="2.7" fill="#2b3345" opacity="0.53" transform="rotate(-20 7.8 29.2)"/><rect x="25.1" y="9.3" width="1.6" height="2.9" fill="#8d7670" opacity="0.85" transform="rotate(25 25.1 9.3)"/><rect x="25.8" y="33.2" width="3.0" height="1.4" fill="#a0a5ae" opacity="0.57" transform="rotate(-30 25.8 33.2)"/><rect x="23.1" y="1.7" width="3.0" height="1.2" fill="#6d7889" opacity="0.45" transform="rotate(25 23.1 1.7)"/><rect x="13.8" y="7.8" width="2.8" height="1.2" fill="#2b3345" opacity="0.89" transform="rotate(-20 13.8 7.8)"/><rect x="11.8" y="8.8" width="2.2" height="1.4" fill="#56617a" opacity="0.89" transform="rotate(-30 11.8 8.8)"/><rect x="31.3" y="31.1" width="2.3" height="1.0" fill="#5a6478" opacity="0.48" transform="rotate(-30 31.3 31.1)"/><rect x="27.9" y="21.6" width="1.8" height="2.6" fill="#9a8f8c" opacity="0.46" transform="rotate(0 27.9 21.6)"/><rect x="25.3" y="28.6" width="2.5" height="2.2" fill="#8d7670" opacity="0.53" transform="rotate(-20 25.3 28.6)"/><rect x="4.8" y="14.2" width="2.5" height="2.3" fill="#2b3345" opacity="0.80" transform="rotate(-20 4.8 14.2)"/><rect x="12.5" y="18.0" width="2.9" height="2.4" fill="#2b3345" opacity="0.47" transform="rotate(25 12.5 18.0)"/><rect x="49.5" y="0.8" width="2.0" height="3.1" fill="#76808f" opacity="0.52" transform="rotate(-30 49.5 0.8)"/><rect x="30.6" y="27.2" width="2.1" height="2.7" fill="#9a8f8c" opacity="0.46" transform="rotate(-30 30.6 27.2)"/><rect x="46.2" y="18.9" width="2.2" height="2.9" fill="#a0a5ae" opacity="0.73" transform="rotate(-30 46.2 18.9)"/><rect x="15.2" y="0.5" width="1.7" height="2.5" fill="#8d7670" opacity="0.80" transform="rotate(25 15.2 0.5)"/><rect x="24.9" y="21.8" width="2.1" height="1.9" fill="#a0a5ae" opacity="0.52" transform="rotate(25 24.9 21.8)"/><rect x="39.9" y="1.1" width="1.9" height="1.9" fill="#a0a5ae" opacity="0.77" transform="rotate(-30 39.9 1.1)"/><rect x="5.7" y="25.4" width="2.3" height="1.3" fill="#323b50" opacity="0.65" transform="rotate(-30 5.7 25.4)"/><rect x="-0.8" y="13.3" width="2.2" height="1.2" fill="#8d7670" opacity="0.58" transform="rotate(15 -0.8 13.3)"/><rect x="47.6" y="33.0" width="2.5" height="2.7" fill="#323b50" opacity="0.73" transform="rotate(0 47.6 33.0)"/><rect x="12.2" y="18.3" width="1.5" height="2.1" fill="#a0a5ae" opacity="0.61" transform="rotate(0 12.2 18.3)"/><rect x="48.2" y="31.3" width="1.5" height="1.4" fill="#74897a" opacity="0.74" transform="rotate(-30 48.2 31.3)"/><rect x="37.3" y="18.9" width="3.0" height="3.1" fill="#56617a" opacity="0.66" transform="rotate(15 37.3 18.9)"/><rect x="47.6" y="6.5" width="1.8" height="1.1" fill="#b9bbbf" opacity="0.61" transform="rotate(-20 47.6 6.5)"/><rect x="40.3" y="27.1" width="2.1" height="2.0" fill="#74897a" opacity="0.66" transform="rotate(0 40.3 27.1)"/><rect x="23.6" y="16.2" width="2.4" height="1.4" fill="#5a6478" opacity="0.54" transform="rotate(15 23.6 16.2)"/><rect x="20.8" y="0.7" width="1.6" height="3.3" fill="#74897a" opacity="0.46" transform="rotate(-20 20.8 0.7)"/><rect x="37.6" y="16.9" width="2.2" height="2.6" fill="#a0a5ae" opacity="0.57" transform="rotate(0 37.6 16.9)"/><rect x="2.0" y="24.5" width="2.7" height="1.3" fill="#a0a5ae" opacity="0.78" transform="rotate(-30 2.0 24.5)"/><rect x="0.1" y="10.3" width="1.8" height="1.2" fill="#b9bbbf" opacity="0.60" transform="rotate(25 0.1 10.3)"/><rect x="33.8" y="9.6" width="2.3" height="2.2" fill="#a0a5ae" opacity="0.52" transform="rotate(25 33.8 9.6)"/><rect x="5.6" y="6.3" width="1.9" height="2.1" fill="#323b50" opacity="0.51" transform="rotate(25 5.6 6.3)"/><rect x="12.5" y="24.4" width="2.5" height="1.4" fill="#a0a5ae" opacity="0.83" transform="rotate(25 12.5 24.4)"/><rect x="36.1" y="13.2" width="1.9" height="3.1" fill="#a0a5ae" opacity="0.50" transform="rotate(0 36.1 13.2)"/><rect x="16.9" y="6.6" width="1.1" height="1.1" fill="#c5c3bd" opacity="0.67" transform="rotate(-30 16.9 6.6)"/><rect x="41.1" y="33.1" width="1.7" height="2.6" fill="#a0a5ae" opacity="0.70" transform="rotate(0 41.1 33.1)"/><rect x="33.7" y="32.4" width="2.9" height="1.6" fill="#c5c3bd" opacity="0.57" transform="rotate(15 33.7 32.4)"/><rect x="5.2" y="16.3" width="2.1" height="3.2" fill="#2b3345" opacity="0.67" transform="rotate(0 5.2 16.3)"/><rect x="10.5" y="31.4" width="1.4" height="2.8" fill="#76808f" opacity="0.75" transform="rotate(-20 10.5 31.4)"/><rect x="26.1" y="25.0" width="3.0" height="2.9" fill="#5a6478" opacity="0.71" transform="rotate(25 26.1 25.0)"/><rect x="15.0" y="31.0" width="3.0" height="1.3" fill="#8b94a3" opacity="0.86" transform="rotate(0 15.0 31.0)"/><rect x="1.8" y="16.3" width="2.3" height="2.1" fill="#76808f" opacity="0.85" transform="rotate(-30 1.8 16.3)"/><rect x="0.2" y="11.1" width="3.0" height="2.4" fill="#2b3345" opacity="0.82" transform="rotate(-20 0.2 11.1)"/><rect x="32.4" y="12.5" width="1.8" height="3.2" fill="#6d7889" opacity="0.71" transform="rotate(-20 32.4 12.5)"/><rect x="39.1" y="21.0" width="2.4" height="2.0" fill="#b9bbbf" opacity="0.48" transform="rotate(-30 39.1 21.0)"/><rect x="42.1" y="29.8" width="1.8" height="3.2" fill="#6d7889" opacity="0.81" transform="rotate(25 42.1 29.8)"/><rect x="13.2" y="16.3" width="2.0" height="1.1" fill="#74897a" opacity="0.54" transform="rotate(-20 13.2 16.3)"/><rect x="12.4" y="6.7" width="2.1" height="3.2" fill="#b9bbbf" opacity="0.45" transform="rotate(25 12.4 6.7)"/><rect x="24.7" y="21.8" width="2.2" height="2.5" fill="#8d7670" opacity="0.85" transform="rotate(0 24.7 21.8)"/><rect x="12.7" y="2.6" width="1.0" height="2.9" fill="#a0a5ae" opacity="0.76" transform="rotate(-20 12.7 2.6)"/><rect x="49.1" y="27.9" width="1.4" height="2.5" fill="#5a6478" opacity="0.81" transform="rotate(0 49.1 27.9)"/><rect x="18.2" y="9.0" width="2.6" height="2.3" fill="#a0a5ae" opacity="0.74" transform="rotate(0 18.2 9.0)"/><rect x="15.9" y="5.2" width="2.1" height="1.3" fill="#8b94a3" opacity="0.90" transform="rotate(-30 15.9 5.2)"/><rect x="45.1" y="9.9" width="2.9" height="2.2" fill="#c5c3bd" opacity="0.67" transform="rotate(-20 45.1 9.9)"/><rect x="31.3" y="13.4" width="2.1" height="1.8" fill="#b9bbbf" opacity="0.68" transform="rotate(15 31.3 13.4)"/><rect x="12.2" y="21.2" width="1.8" height="2.6" fill="#56617a" opacity="0.60" transform="rotate(-20 12.2 21.2)"/><rect x="42.8" y="28.0" width="2.2" height="2.0" fill="#323b50" opacity="0.51" transform="rotate(0 42.8 28.0)"/><rect x="40.7" y="3.4" width="1.8" height="2.6" fill="#a0a5ae" opacity="0.74" transform="rotate(-30 40.7 3.4)"/><rect x="23.5" y="23.3" width="2.7" height="3.2" fill="#2b3345" opacity="0.76" transform="rotate(15 23.5 23.3)"/><rect x="12.1" y="22.3" width="1.9" height="2.6" fill="#56617a" opacity="0.47" transform="rotate(-30 12.1 22.3)"/><rect x="44.3" y="5.8" width="1.8" height="2.3" fill="#9a8f8c" opacity="0.50" transform="rotate(0 44.3 5.8)"/><rect x="46.0" y="28.1" width="2.9" height="1.4" fill="#8b94a3" opacity="0.59" transform="rotate(0 46.0 28.1)"/><rect x="10.6" y="24.3" width="1.9" height="1.3" fill="#74897a" opacity="0.63" transform="rotate(-20 10.6 24.3)"/><rect x="27.4" y="27.0" width="1.3" height="1.4" fill="#8b94a3" opacity="0.70" transform="rotate(0 27.4 27.0)"/><rect x="44.8" y="14.1" width="1.3" height="3.1" fill="#2b3345" opacity="0.70" transform="rotate(-20 44.8 14.1)"/><rect x="13.2" y="13.0" width="1.7" height="1.2" fill="#a0a5ae" opacity="0.61" transform="rotate(0 13.2 13.0)"/><rect x="28.1" y="4.3" width="1.0" height="2.8" fill="#c5c3bd" opacity="0.49" transform="rotate(-20 28.1 4.3)"/><rect x="16.5" y="3.9" width="2.7" height="3.4" fill="#b9bbbf" opacity="0.67" transform="rotate(15 16.5 3.9)"/><rect x="17.3" y="18.6" width="2.2" height="1.5" fill="#74897a" opacity="0.75" transform="rotate(25 17.3 18.6)"/><rect x="12.1" y="5.6" width="1.6" height="1.6" fill="#9a8f8c" opacity="0.65" transform="rotate(-30 12.1 5.6)"/><rect x="8.1" y="-0.1" width="1.4" height="1.3" fill="#8b94a3" opacity="0.57" transform="rotate(-30 8.1 -0.1)"/><rect x="38.2" y="9.9" width="2.1" height="1.0" fill="#a0a5ae" opacity="0.48" transform="rotate(0 38.2 9.9)"/><rect x="-0.4" y="17.5" width="2.8" height="2.9" fill="#323b50" opacity="0.67" transform="rotate(0 -0.4 17.5)"/><rect x="40.8" y="28.0" width="2.7" height="3.4" fill="#8b94a3" opacity="0.87" transform="rotate(15 40.8 28.0)"/><rect x="19.9" y="23.7" width="1.6" height="3.2" fill="#6d7889" opacity="0.45" transform="rotate(-20 19.9 23.7)"/><rect x="10.8" y="12.6" width="1.8" height="2.6" fill="#9a8f8c" opacity="0.90" transform="rotate(15 10.8 12.6)"/><rect x="17.4" y="8.8" width="3.0" height="1.8" fill="#8b94a3" opacity="0.57" transform="rotate(-20 17.4 8.8)"/><rect x="37.6" y="6.4" width="2.6" height="2.3" fill="#c5c3bd" opacity="0.54" transform="rotate(0 37.6 6.4)"/><rect x="4.5" y="4.0" width="1.8" height="2.0" fill="#6d7889" opacity="0.63" transform="rotate(-30 4.5 4.0)"/><rect x="20.0" y="10.3" width="2.2" height="3.3" fill="#a0a5ae" opacity="0.46" transform="rotate(-20 20.0 10.3)"/><rect x="15.7" y="25.4" width="1.2" height="3.4" fill="#b9bbbf" opacity="0.66" transform="rotate(-20 15.7 25.4)"/><rect x="25.0" y="26.3" width="3.0" height="3.0" fill="#8b94a3" opacity="0.75" transform="rotate(0 25.0 26.3)"/><rect x="44.8" y="26.2" width="2.2" height="1.0" fill="#323b50" opacity="0.74" transform="rotate(15 44.8 26.2)"/><rect x="46.4" y="0.9" width="2.4" height="1.8" fill="#5a6478" opacity="0.84" transform="rotate(15 46.4 0.9)"/><rect x="25.3" y="18.9" width="1.3" height="3.0" fill="#323b50" opacity="0.78" transform="rotate(15 25.3 18.9)"/><rect x="33.6" y="13.7" width="1.8" height="1.6" fill="#74897a" opacity="0.69" transform="rotate(-30 33.6 13.7)"/><rect x="25.8" y="0.1" width="2.4" height="2.1" fill="#74897a" opacity="0.47" transform="rotate(-30 25.8 0.1)"/><rect x="47.4" y="4.3" width="2.0" height="3.4" fill="#323b50" opacity="0.73" transform="rotate(-20 47.4 4.3)"/></g><path d="M0 0L16 0L8 12L0 16Z" fill="#232b3c" opacity=".5"/><path d="M52 14L52 34.5L40 34.5Z" fill="#2a3346" opacity=".35"/><rect x="42" y="25.5" width="6.5" height="5" fill="#bcbab5" opacity=".85"/><path d="M27 6L34 17.6" stroke="#f4f7fc" stroke-width="1.7" stroke-linecap="round"/><path d="M24.6 14.6L30.2 11.4L38 7" stroke="#e4eaf2" stroke-width="1.2" stroke-linecap="round" fill="none"/><path d="M26.6 5L27.8 7" stroke="#4a76d0" stroke-width="1.5"/></svg></div>
<div class="a" style="left:375px;top:943.8px;width:58px;height:40.0px;background:#fff;box-shadow:0 1px 2.5px rgba(0,0,0,.5),0 0 1px rgba(0,0,0,.35)"><svg class="a" style="left:3px;top:3px" width="52" height="34.0" viewBox="0 0 52 34.0" preserveAspectRatio="none"><defs><linearGradient id="b1" x1="0" y1="0" x2="0" y2="1"><stop offset="0" stop-color="#2d62b6"/><stop offset="0.3" stop-color="#4f8bd3"/><stop offset="0.6" stop-color="#a4cbed"/><stop offset="1" stop-color="#c5dcef"/></linearGradient><linearGradient id="b2" x1="0" y1="0" x2="0" y2="1"><stop offset="0" stop-color="#6ca43a"/><stop offset="0.4" stop-color="#4c8628"/><stop offset="1" stop-color="#2b5615"/></linearGradient><filter id="bb"><feGaussianBlur stdDeviation="1"/></filter></defs><rect width="52" height="34" fill="url(#b1)"/><g fill="#e6eff8" filter="url(#bb)" opacity=".8"><ellipse cx="40" cy="5.5" rx="8" ry="2"/><ellipse cx="46" cy="9.5" rx="6" ry="1.8"/><ellipse cx="22" cy="4" rx="6" ry="1.2"/><ellipse cx="18" cy="8" rx="4" ry="1"/><ellipse cx="44" cy="16.5" rx="9" ry="1.5"/></g><path d="M0 16.5Q9 13 18 14.8Q30 17.4 38 19.2Q45 20.6 52 19.6V34H0Z" fill="url(#b2)"/></svg></div>
<div class="a" style="left:375px;top:1007.0px;width:58px;height:58.0px;background:#fff;box-shadow:0 1px 2.5px rgba(0,0,0,.5),0 0 1px rgba(0,0,0,.35)"><svg class="a" style="left:3px;top:3px" width="52" height="52.0" viewBox="0 0 52 52.0" preserveAspectRatio="none"><defs><radialGradient id="rbg" cx="42.0" cy="43.0" r="60" gradientUnits="userSpaceOnUse"><stop offset="0" stop-color="#04050a"/><stop offset="0.3" stop-color="#0d1340"/><stop offset="1" stop-color="#16236a"/></radialGradient><linearGradient id="rbp" x1="0" y1="0" x2="1" y2="0"><stop offset="0" stop-color="#a9c8f8"/><stop offset="0.22" stop-color="#a9c8f8"/><stop offset="0.6" stop-color="#3e63c6"/><stop offset="1" stop-color="#0d1340"/></linearGradient><filter id="rbb" x="-20%" y="-20%" width="140%" height="140%"><feGaussianBlur stdDeviation=".35"/></filter></defs><rect width="52" height="52" fill="url(#rbg)"/><path d="M42.0 43.0L-26.9 92.8" stroke="#000" stroke-width="3.2" opacity=".55"/><path d="M42.0 43.0L-34.7 83.4" stroke="#3e63c6" stroke-width="2.0" opacity=".22"/><path d="M42.0 43.0L-40.8 73.2" stroke="#000" stroke-width="3.2" opacity=".55"/><path d="M42.0 43.0L-45.1 62.4" stroke="#3e63c6" stroke-width="2.0" opacity=".22"/><path d="M42.0 43.0L-47.5 51.1" stroke="#000" stroke-width="3.2" opacity=".55"/><path d="M42.0 43.0L-47.9 39.6" stroke="#3e63c6" stroke-width="2.0" opacity=".22"/><path d="M42.0 43.0L-46.3 28.2" stroke="#000" stroke-width="3.2" opacity=".55"/><path d="M42.0 43.0L-42.8 17.2" stroke="#3e63c6" stroke-width="2.0" opacity=".22"/><path d="M42.0 43.0L-37.5 6.7" stroke="#000" stroke-width="3.2" opacity=".55"/><path d="M42.0 43.0L-30.3 -3.0" stroke="#3e63c6" stroke-width="2.0" opacity=".22"/><path d="M42.0 43.0L-21.6 -11.7" stroke="#000" stroke-width="3.2" opacity=".55"/><path d="M42.0 43.0L-11.5 -19.2" stroke="#3e63c6" stroke-width="2.0" opacity=".22"/><path d="M42.0 43.0L-0.3 -25.3" stroke="#000" stroke-width="3.2" opacity=".55"/><path d="M42.0 43.0L12.0 -30.0" stroke="#3e63c6" stroke-width="2.0" opacity=".22"/><path d="M42.0 43.0L24.8 -33.0" stroke="#000" stroke-width="3.2" opacity=".55"/><path d="M42.0 43.0L38.1 -34.3" stroke="#3e63c6" stroke-width="2.0" opacity=".22"/><path d="M42.0 43.0L51.4 -34.0" stroke="#000" stroke-width="3.2" opacity=".55"/><path d="M42.0 43.0L64.5 -31.9" stroke="#3e63c6" stroke-width="2.0" opacity=".22"/><path d="M42.0 43.0L77.2 -28.2" stroke="#000" stroke-width="3.2" opacity=".55"/><path d="M42.0 43.0L89.0 -23.0" stroke="#3e63c6" stroke-width="2.0" opacity=".22"/><path d="M42.0 43.0L99.9 -16.3" stroke="#000" stroke-width="3.2" opacity=".55"/><path d="M42.0 43.0L109.4 -8.3" stroke="#3e63c6" stroke-width="2.0" opacity=".22"/><path d="M42.0 43.0L117.5 0.8" stroke="#000" stroke-width="3.2" opacity=".55"/><path d="M42.0 43.0L123.9 10.9" stroke="#3e63c6" stroke-width="2.0" opacity=".22"/><path d="M42.0 43.0L128.5 21.7" stroke="#000" stroke-width="3.2" opacity=".55"/><path d="M42.0 43.0L131.2 32.9" stroke="#3e63c6" stroke-width="2.0" opacity=".22"/><path d="M42.0 43.0L132.0 44.4" stroke="#000" stroke-width="3.2" opacity=".55"/><path d="M42.0 43.0L130.8 55.8" stroke="#3e63c6" stroke-width="2.0" opacity=".22"/><path d="M42.0 43.0L127.6 66.9" stroke="#000" stroke-width="3.2" opacity=".55"/><path d="M42.0 43.0L122.5 77.5" stroke="#3e63c6" stroke-width="2.0" opacity=".22"/><g filter="url(#rbb)"><ellipse cx="32.5" cy="43.4" rx="3.4" ry="0.70" fill="url(#rbp)" transform="rotate(357.4 32.5 43.4)"/><ellipse cx="19.7" cy="44.0" rx="4.9" ry="1.35" fill="url(#rbp)" transform="rotate(357.4 19.7 44.0)"/><ellipse cx="6.9" cy="44.6" rx="4.9" ry="2.12" fill="url(#rbp)" transform="rotate(357.4 6.9 44.6)"/><ellipse cx="26.2" cy="41.7" rx="4.9" ry="0.96" fill="url(#rbp)" transform="rotate(4.8 26.2 41.7)"/><ellipse cx="13.4" cy="40.6" rx="4.9" ry="1.74" fill="url(#rbp)" transform="rotate(4.8 13.4 40.6)"/><ellipse cx="32.8" cy="41.0" rx="3.4" ry="0.70" fill="url(#rbp)" transform="rotate(12.3 32.8 41.0)"/><ellipse cx="20.4" cy="38.3" rx="4.9" ry="1.35" fill="url(#rbp)" transform="rotate(12.3 20.4 38.3)"/><ellipse cx="8.0" cy="35.6" rx="4.9" ry="2.12" fill="url(#rbp)" transform="rotate(12.3 8.0 35.6)"/><ellipse cx="27.3" cy="37.7" rx="4.9" ry="0.96" fill="url(#rbp)" transform="rotate(19.9 27.3 37.7)"/><ellipse cx="15.5" cy="33.4" rx="4.9" ry="1.74" fill="url(#rbp)" transform="rotate(19.9 15.5 33.4)"/><ellipse cx="3.7" cy="29.2" rx="4.9" ry="2.51" fill="url(#rbp)" transform="rotate(19.9 3.7 29.2)"/><ellipse cx="33.9" cy="38.7" rx="3.4" ry="0.70" fill="url(#rbp)" transform="rotate(27.7 33.9 38.7)"/><ellipse cx="23.0" cy="33.0" rx="4.9" ry="1.35" fill="url(#rbp)" transform="rotate(27.7 23.0 33.0)"/><ellipse cx="12.0" cy="27.3" rx="4.9" ry="2.12" fill="url(#rbp)" transform="rotate(27.7 12.0 27.3)"/><ellipse cx="1.1" cy="21.5" rx="4.9" ry="2.90" fill="url(#rbp)" transform="rotate(27.7 1.1 21.5)"/><ellipse cx="29.8" cy="34.2" rx="4.9" ry="0.96" fill="url(#rbp)" transform="rotate(35.8 29.8 34.2)"/><ellipse cx="20.0" cy="27.1" rx="4.9" ry="1.74" fill="url(#rbp)" transform="rotate(35.8 20.0 27.1)"/><ellipse cx="10.2" cy="20.1" rx="4.9" ry="2.51" fill="url(#rbp)" transform="rotate(35.8 10.2 20.1)"/><ellipse cx="35.7" cy="36.9" rx="3.4" ry="0.70" fill="url(#rbp)" transform="rotate(44.3 35.7 36.9)"/><ellipse cx="27.3" cy="28.6" rx="4.9" ry="1.35" fill="url(#rbp)" transform="rotate(44.3 27.3 28.6)"/><ellipse cx="18.8" cy="20.4" rx="4.9" ry="2.12" fill="url(#rbp)" transform="rotate(44.3 18.8 20.4)"/><ellipse cx="10.3" cy="12.1" rx="4.9" ry="2.90" fill="url(#rbp)" transform="rotate(44.3 10.3 12.1)"/><ellipse cx="33.4" cy="31.5" rx="4.9" ry="0.96" fill="url(#rbp)" transform="rotate(53.2 33.4 31.5)"/><ellipse cx="26.5" cy="22.3" rx="4.9" ry="1.74" fill="url(#rbp)" transform="rotate(53.2 26.5 22.3)"/><ellipse cx="19.5" cy="13.0" rx="4.9" ry="2.51" fill="url(#rbp)" transform="rotate(53.2 19.5 13.0)"/><ellipse cx="38.1" cy="35.5" rx="3.4" ry="0.70" fill="url(#rbp)" transform="rotate(62.4 38.1 35.5)"/><ellipse cx="32.9" cy="25.5" rx="4.9" ry="1.35" fill="url(#rbp)" transform="rotate(62.4 32.9 25.5)"/><ellipse cx="27.6" cy="15.5" rx="4.9" ry="2.12" fill="url(#rbp)" transform="rotate(62.4 27.6 15.5)"/><ellipse cx="37.7" cy="29.8" rx="4.9" ry="0.96" fill="url(#rbp)" transform="rotate(72.0 37.7 29.8)"/><ellipse cx="34.3" cy="19.2" rx="4.9" ry="1.74" fill="url(#rbp)" transform="rotate(72.0 34.3 19.2)"/><ellipse cx="40.8" cy="34.9" rx="3.4" ry="0.70" fill="url(#rbp)" transform="rotate(81.9 40.8 34.9)"/><ellipse cx="39.3" cy="24.0" rx="4.9" ry="1.35" fill="url(#rbp)" transform="rotate(81.9 39.3 24.0)"/><ellipse cx="37.7" cy="13.0" rx="4.9" ry="2.12" fill="url(#rbp)" transform="rotate(81.9 37.7 13.0)"/><ellipse cx="42.4" cy="29.3" rx="4.9" ry="0.96" fill="url(#rbp)" transform="rotate(91.9 42.4 29.3)"/><ellipse cx="42.8" cy="18.3" rx="4.9" ry="1.74" fill="url(#rbp)" transform="rotate(91.9 42.8 18.3)"/><ellipse cx="43.7" cy="35.0" rx="3.4" ry="0.70" fill="url(#rbp)" transform="rotate(101.8 43.7 35.0)"/><ellipse cx="45.9" cy="24.1" rx="4.9" ry="1.35" fill="url(#rbp)" transform="rotate(101.8 45.9 24.1)"/><ellipse cx="48.2" cy="13.3" rx="4.9" ry="2.12" fill="url(#rbp)" transform="rotate(101.8 48.2 13.3)"/><ellipse cx="47.1" cy="30.1" rx="4.9" ry="0.96" fill="url(#rbp)" transform="rotate(111.6 47.1 30.1)"/></g><rect x="0" y="43.5" width="52" height="8.5" fill="#0d1340" opacity=".82"/><path d="M0 46.5L40 45.5L52 47V48.6L40 47L0 49Z" fill="#16236a" opacity=".55"/></svg></div>
<div class="a" style="left:375px;top:1079.0px;width:58px;height:58.0px;background:#fff;box-shadow:0 1px 2.5px rgba(0,0,0,.5),0 0 1px rgba(0,0,0,.35)"><svg class="a" style="left:3px;top:3px" width="52" height="52.0" viewBox="0 0 52 52.0" preserveAspectRatio="none"><defs><radialGradient id="rgg" cx="42.0" cy="43.0" r="60" gradientUnits="userSpaceOnUse"><stop offset="0" stop-color="#04050a"/><stop offset="0.3" stop-color="#0a2731"/><stop offset="1" stop-color="#11414e"/></radialGradient><linearGradient id="rgp" x1="0" y1="0" x2="1" y2="0"><stop offset="0" stop-color="#b0e4e4"/><stop offset="0.22" stop-color="#b0e4e4"/><stop offset="0.6" stop-color="#3f909c"/><stop offset="1" stop-color="#0a2731"/></linearGradient><filter id="rgb" x="-20%" y="-20%" width="140%" height="140%"><feGaussianBlur stdDeviation=".35"/></filter></defs><rect width="52" height="52" fill="url(#rgg)"/><path d="M42.0 43.0L-26.9 92.8" stroke="#000" stroke-width="3.2" opacity=".55"/><path d="M42.0 43.0L-34.7 83.4" stroke="#3f909c" stroke-width="2.0" opacity=".22"/><path d="M42.0 43.0L-40.8 73.2" stroke="#000" stroke-width="3.2" opacity=".55"/><path d="M42.0 43.0L-45.1 62.4" stroke="#3f909c" stroke-width="2.0" opacity=".22"/><path d="M42.0 43.0L-47.5 51.1" stroke="#000" stroke-width="3.2" opacity=".55"/><path d="M42.0 43.0L-47.9 39.6" stroke="#3f909c" stroke-width="2.0" opacity=".22"/><path d="M42.0 43.0L-46.3 28.2" stroke="#000" stroke-width="3.2" opacity=".55"/><path d="M42.0 43.0L-42.8 17.2" stroke="#3f909c" stroke-width="2.0" opacity=".22"/><path d="M42.0 43.0L-37.5 6.7" stroke="#000" stroke-width="3.2" opacity=".55"/><path d="M42.0 43.0L-30.3 -3.0" stroke="#3f909c" stroke-width="2.0" opacity=".22"/><path d="M42.0 43.0L-21.6 -11.7" stroke="#000" stroke-width="3.2" opacity=".55"/><path d="M42.0 43.0L-11.5 -19.2" stroke="#3f909c" stroke-width="2.0" opacity=".22"/><path d="M42.0 43.0L-0.3 -25.3" stroke="#000" stroke-width="3.2" opacity=".55"/><path d="M42.0 43.0L12.0 -30.0" stroke="#3f909c" stroke-width="2.0" opacity=".22"/><path d="M42.0 43.0L24.8 -33.0" stroke="#000" stroke-width="3.2" opacity=".55"/><path d="M42.0 43.0L38.1 -34.3" stroke="#3f909c" stroke-width="2.0" opacity=".22"/><path d="M42.0 43.0L51.4 -34.0" stroke="#000" stroke-width="3.2" opacity=".55"/><path d="M42.0 43.0L64.5 -31.9" stroke="#3f909c" stroke-width="2.0" opacity=".22"/><path d="M42.0 43.0L77.2 -28.2" stroke="#000" stroke-width="3.2" opacity=".55"/><path d="M42.0 43.0L89.0 -23.0" stroke="#3f909c" stroke-width="2.0" opacity=".22"/><path d="M42.0 43.0L99.9 -16.3" stroke="#000" stroke-width="3.2" opacity=".55"/><path d="M42.0 43.0L109.4 -8.3" stroke="#3f909c" stroke-width="2.0" opacity=".22"/><path d="M42.0 43.0L117.5 0.8" stroke="#000" stroke-width="3.2" opacity=".55"/><path d="M42.0 43.0L123.9 10.9" stroke="#3f909c" stroke-width="2.0" opacity=".22"/><path d="M42.0 43.0L128.5 21.7" stroke="#000" stroke-width="3.2" opacity=".55"/><path d="M42.0 43.0L131.2 32.9" stroke="#3f909c" stroke-width="2.0" opacity=".22"/><path d="M42.0 43.0L132.0 44.4" stroke="#000" stroke-width="3.2" opacity=".55"/><path d="M42.0 43.0L130.8 55.8" stroke="#3f909c" stroke-width="2.0" opacity=".22"/><path d="M42.0 43.0L127.6 66.9" stroke="#000" stroke-width="3.2" opacity=".55"/><path d="M42.0 43.0L122.5 77.5" stroke="#3f909c" stroke-width="2.0" opacity=".22"/><g filter="url(#rgb)"><ellipse cx="32.5" cy="43.4" rx="3.4" ry="0.70" fill="url(#rgp)" transform="rotate(357.4 32.5 43.4)"/><ellipse cx="19.7" cy="44.0" rx="4.9" ry="1.35" fill="url(#rgp)" transform="rotate(357.4 19.7 44.0)"/><ellipse cx="6.9" cy="44.6" rx="4.9" ry="2.12" fill="url(#rgp)" transform="rotate(357.4 6.9 44.6)"/><ellipse cx="26.2" cy="41.7" rx="4.9" ry="0.96" fill="url(#rgp)" transform="rotate(4.8 26.2 41.7)"/><ellipse cx="13.4" cy="40.6" rx="4.9" ry="1.74" fill="url(#rgp)" transform="rotate(4.8 13.4 40.6)"/><ellipse cx="32.8" cy="41.0" rx="3.4" ry="0.70" fill="url(#rgp)" transform="rotate(12.3 32.8 41.0)"/><ellipse cx="20.4" cy="38.3" rx="4.9" ry="1.35" fill="url(#rgp)" transform="rotate(12.3 20.4 38.3)"/><ellipse cx="8.0" cy="35.6" rx="4.9" ry="2.12" fill="url(#rgp)" transform="rotate(12.3 8.0 35.6)"/><ellipse cx="27.3" cy="37.7" rx="4.9" ry="0.96" fill="url(#rgp)" transform="rotate(19.9 27.3 37.7)"/><ellipse cx="15.5" cy="33.4" rx="4.9" ry="1.74" fill="url(#rgp)" transform="rotate(19.9 15.5 33.4)"/><ellipse cx="3.7" cy="29.2" rx="4.9" ry="2.51" fill="url(#rgp)" transform="rotate(19.9 3.7 29.2)"/><ellipse cx="33.9" cy="38.7" rx="3.4" ry="0.70" fill="url(#rgp)" transform="rotate(27.7 33.9 38.7)"/><ellipse cx="23.0" cy="33.0" rx="4.9" ry="1.35" fill="url(#rgp)" transform="rotate(27.7 23.0 33.0)"/><ellipse cx="12.0" cy="27.3" rx="4.9" ry="2.12" fill="url(#rgp)" transform="rotate(27.7 12.0 27.3)"/><ellipse cx="1.1" cy="21.5" rx="4.9" ry="2.90" fill="url(#rgp)" transform="rotate(27.7 1.1 21.5)"/><ellipse cx="29.8" cy="34.2" rx="4.9" ry="0.96" fill="url(#rgp)" transform="rotate(35.8 29.8 34.2)"/><ellipse cx="20.0" cy="27.1" rx="4.9" ry="1.74" fill="url(#rgp)" transform="rotate(35.8 20.0 27.1)"/><ellipse cx="10.2" cy="20.1" rx="4.9" ry="2.51" fill="url(#rgp)" transform="rotate(35.8 10.2 20.1)"/><ellipse cx="35.7" cy="36.9" rx="3.4" ry="0.70" fill="url(#rgp)" transform="rotate(44.3 35.7 36.9)"/><ellipse cx="27.3" cy="28.6" rx="4.9" ry="1.35" fill="url(#rgp)" transform="rotate(44.3 27.3 28.6)"/><ellipse cx="18.8" cy="20.4" rx="4.9" ry="2.12" fill="url(#rgp)" transform="rotate(44.3 18.8 20.4)"/><ellipse cx="10.3" cy="12.1" rx="4.9" ry="2.90" fill="url(#rgp)" transform="rotate(44.3 10.3 12.1)"/><ellipse cx="33.4" cy="31.5" rx="4.9" ry="0.96" fill="url(#rgp)" transform="rotate(53.2 33.4 31.5)"/><ellipse cx="26.5" cy="22.3" rx="4.9" ry="1.74" fill="url(#rgp)" transform="rotate(53.2 26.5 22.3)"/><ellipse cx="19.5" cy="13.0" rx="4.9" ry="2.51" fill="url(#rgp)" transform="rotate(53.2 19.5 13.0)"/><ellipse cx="38.1" cy="35.5" rx="3.4" ry="0.70" fill="url(#rgp)" transform="rotate(62.4 38.1 35.5)"/><ellipse cx="32.9" cy="25.5" rx="4.9" ry="1.35" fill="url(#rgp)" transform="rotate(62.4 32.9 25.5)"/><ellipse cx="27.6" cy="15.5" rx="4.9" ry="2.12" fill="url(#rgp)" transform="rotate(62.4 27.6 15.5)"/><ellipse cx="37.7" cy="29.8" rx="4.9" ry="0.96" fill="url(#rgp)" transform="rotate(72.0 37.7 29.8)"/><ellipse cx="34.3" cy="19.2" rx="4.9" ry="1.74" fill="url(#rgp)" transform="rotate(72.0 34.3 19.2)"/><ellipse cx="40.8" cy="34.9" rx="3.4" ry="0.70" fill="url(#rgp)" transform="rotate(81.9 40.8 34.9)"/><ellipse cx="39.3" cy="24.0" rx="4.9" ry="1.35" fill="url(#rgp)" transform="rotate(81.9 39.3 24.0)"/><ellipse cx="37.7" cy="13.0" rx="4.9" ry="2.12" fill="url(#rgp)" transform="rotate(81.9 37.7 13.0)"/><ellipse cx="42.4" cy="29.3" rx="4.9" ry="0.96" fill="url(#rgp)" transform="rotate(91.9 42.4 29.3)"/><ellipse cx="42.8" cy="18.3" rx="4.9" ry="1.74" fill="url(#rgp)" transform="rotate(91.9 42.8 18.3)"/><ellipse cx="43.7" cy="35.0" rx="3.4" ry="0.70" fill="url(#rgp)" transform="rotate(101.8 43.7 35.0)"/><ellipse cx="45.9" cy="24.1" rx="4.9" ry="1.35" fill="url(#rgp)" transform="rotate(101.8 45.9 24.1)"/><ellipse cx="48.2" cy="13.3" rx="4.9" ry="2.12" fill="url(#rgp)" transform="rotate(101.8 48.2 13.3)"/><ellipse cx="47.1" cy="30.1" rx="4.9" ry="0.96" fill="url(#rgp)" transform="rotate(111.6 47.1 30.1)"/></g><rect x="0" y="43.5" width="52" height="8.5" fill="#0a2731" opacity=".82"/><path d="M0 46.5L40 45.5L52 47V48.6L40 47L0 49Z" fill="#11414e" opacity=".55"/></svg></div>
<div class="a" style="left:375px;top:1151.0px;width:58px;height:58.0px;background:#fff;box-shadow:0 1px 2.5px rgba(0,0,0,.5),0 0 1px rgba(0,0,0,.35)"><svg class="a" style="left:3px;top:3px" width="52" height="52.0" viewBox="0 0 52 52.0" preserveAspectRatio="none"><defs><radialGradient id="rpg" cx="42.0" cy="43.0" r="60" gradientUnits="userSpaceOnUse"><stop offset="0" stop-color="#04050a"/><stop offset="0.3" stop-color="#270c47"/><stop offset="1" stop-color="#4a1d86"/></radialGradient><linearGradient id="rpp" x1="0" y1="0" x2="1" y2="0"><stop offset="0" stop-color="#e0b5fa"/><stop offset="0.22" stop-color="#e0b5fa"/><stop offset="0.6" stop-color="#9353da"/><stop offset="1" stop-color="#270c47"/></linearGradient><filter id="rpb" x="-20%" y="-20%" width="140%" height="140%"><feGaussianBlur stdDeviation=".35"/></filter></defs><rect width="52" height="52" fill="url(#rpg)"/><path d="M42.0 43.0L-26.9 92.8" stroke="#000" stroke-width="3.2" opacity=".55"/><path d="M42.0 43.0L-34.7 83.4" stroke="#9353da" stroke-width="2.0" opacity=".22"/><path d="M42.0 43.0L-40.8 73.2" stroke="#000" stroke-width="3.2" opacity=".55"/><path d="M42.0 43.0L-45.1 62.4" stroke="#9353da" stroke-width="2.0" opacity=".22"/><path d="M42.0 43.0L-47.5 51.1" stroke="#000" stroke-width="3.2" opacity=".55"/><path d="M42.0 43.0L-47.9 39.6" stroke="#9353da" stroke-width="2.0" opacity=".22"/><path d="M42.0 43.0L-46.3 28.2" stroke="#000" stroke-width="3.2" opacity=".55"/><path d="M42.0 43.0L-42.8 17.2" stroke="#9353da" stroke-width="2.0" opacity=".22"/><path d="M42.0 43.0L-37.5 6.7" stroke="#000" stroke-width="3.2" opacity=".55"/><path d="M42.0 43.0L-30.3 -3.0" stroke="#9353da" stroke-width="2.0" opacity=".22"/><path d="M42.0 43.0L-21.6 -11.7" stroke="#000" stroke-width="3.2" opacity=".55"/><path d="M42.0 43.0L-11.5 -19.2" stroke="#9353da" stroke-width="2.0" opacity=".22"/><path d="M42.0 43.0L-0.3 -25.3" stroke="#000" stroke-width="3.2" opacity=".55"/><path d="M42.0 43.0L12.0 -30.0" stroke="#9353da" stroke-width="2.0" opacity=".22"/><path d="M42.0 43.0L24.8 -33.0" stroke="#000" stroke-width="3.2" opacity=".55"/><path d="M42.0 43.0L38.1 -34.3" stroke="#9353da" stroke-width="2.0" opacity=".22"/><path d="M42.0 43.0L51.4 -34.0" stroke="#000" stroke-width="3.2" opacity=".55"/><path d="M42.0 43.0L64.5 -31.9" stroke="#9353da" stroke-width="2.0" opacity=".22"/><path d="M42.0 43.0L77.2 -28.2" stroke="#000" stroke-width="3.2" opacity=".55"/><path d="M42.0 43.0L89.0 -23.0" stroke="#9353da" stroke-width="2.0" opacity=".22"/><path d="M42.0 43.0L99.9 -16.3" stroke="#000" stroke-width="3.2" opacity=".55"/><path d="M42.0 43.0L109.4 -8.3" stroke="#9353da" stroke-width="2.0" opacity=".22"/><path d="M42.0 43.0L117.5 0.8" stroke="#000" stroke-width="3.2" opacity=".55"/><path d="M42.0 43.0L123.9 10.9" stroke="#9353da" stroke-width="2.0" opacity=".22"/><path d="M42.0 43.0L128.5 21.7" stroke="#000" stroke-width="3.2" opacity=".55"/><path d="M42.0 43.0L131.2 32.9" stroke="#9353da" stroke-width="2.0" opacity=".22"/><path d="M42.0 43.0L132.0 44.4" stroke="#000" stroke-width="3.2" opacity=".55"/><path d="M42.0 43.0L130.8 55.8" stroke="#9353da" stroke-width="2.0" opacity=".22"/><path d="M42.0 43.0L127.6 66.9" stroke="#000" stroke-width="3.2" opacity=".55"/><path d="M42.0 43.0L122.5 77.5" stroke="#9353da" stroke-width="2.0" opacity=".22"/><g filter="url(#rpb)"><ellipse cx="32.5" cy="43.4" rx="3.4" ry="0.70" fill="url(#rpp)" transform="rotate(357.4 32.5 43.4)"/><ellipse cx="19.7" cy="44.0" rx="4.9" ry="1.35" fill="url(#rpp)" transform="rotate(357.4 19.7 44.0)"/><ellipse cx="6.9" cy="44.6" rx="4.9" ry="2.12" fill="url(#rpp)" transform="rotate(357.4 6.9 44.6)"/><ellipse cx="26.2" cy="41.7" rx="4.9" ry="0.96" fill="url(#rpp)" transform="rotate(4.8 26.2 41.7)"/><ellipse cx="13.4" cy="40.6" rx="4.9" ry="1.74" fill="url(#rpp)" transform="rotate(4.8 13.4 40.6)"/><ellipse cx="32.8" cy="41.0" rx="3.4" ry="0.70" fill="url(#rpp)" transform="rotate(12.3 32.8 41.0)"/><ellipse cx="20.4" cy="38.3" rx="4.9" ry="1.35" fill="url(#rpp)" transform="rotate(12.3 20.4 38.3)"/><ellipse cx="8.0" cy="35.6" rx="4.9" ry="2.12" fill="url(#rpp)" transform="rotate(12.3 8.0 35.6)"/><ellipse cx="27.3" cy="37.7" rx="4.9" ry="0.96" fill="url(#rpp)" transform="rotate(19.9 27.3 37.7)"/><ellipse cx="15.5" cy="33.4" rx="4.9" ry="1.74" fill="url(#rpp)" transform="rotate(19.9 15.5 33.4)"/><ellipse cx="3.7" cy="29.2" rx="4.9" ry="2.51" fill="url(#rpp)" transform="rotate(19.9 3.7 29.2)"/><ellipse cx="33.9" cy="38.7" rx="3.4" ry="0.70" fill="url(#rpp)" transform="rotate(27.7 33.9 38.7)"/><ellipse cx="23.0" cy="33.0" rx="4.9" ry="1.35" fill="url(#rpp)" transform="rotate(27.7 23.0 33.0)"/><ellipse cx="12.0" cy="27.3" rx="4.9" ry="2.12" fill="url(#rpp)" transform="rotate(27.7 12.0 27.3)"/><ellipse cx="1.1" cy="21.5" rx="4.9" ry="2.90" fill="url(#rpp)" transform="rotate(27.7 1.1 21.5)"/><ellipse cx="29.8" cy="34.2" rx="4.9" ry="0.96" fill="url(#rpp)" transform="rotate(35.8 29.8 34.2)"/><ellipse cx="20.0" cy="27.1" rx="4.9" ry="1.74" fill="url(#rpp)" transform="rotate(35.8 20.0 27.1)"/><ellipse cx="10.2" cy="20.1" rx="4.9" ry="2.51" fill="url(#rpp)" transform="rotate(35.8 10.2 20.1)"/><ellipse cx="35.7" cy="36.9" rx="3.4" ry="0.70" fill="url(#rpp)" transform="rotate(44.3 35.7 36.9)"/><ellipse cx="27.3" cy="28.6" rx="4.9" ry="1.35" fill="url(#rpp)" transform="rotate(44.3 27.3 28.6)"/><ellipse cx="18.8" cy="20.4" rx="4.9" ry="2.12" fill="url(#rpp)" transform="rotate(44.3 18.8 20.4)"/><ellipse cx="10.3" cy="12.1" rx="4.9" ry="2.90" fill="url(#rpp)" transform="rotate(44.3 10.3 12.1)"/><ellipse cx="33.4" cy="31.5" rx="4.9" ry="0.96" fill="url(#rpp)" transform="rotate(53.2 33.4 31.5)"/><ellipse cx="26.5" cy="22.3" rx="4.9" ry="1.74" fill="url(#rpp)" transform="rotate(53.2 26.5 22.3)"/><ellipse cx="19.5" cy="13.0" rx="4.9" ry="2.51" fill="url(#rpp)" transform="rotate(53.2 19.5 13.0)"/><ellipse cx="38.1" cy="35.5" rx="3.4" ry="0.70" fill="url(#rpp)" transform="rotate(62.4 38.1 35.5)"/><ellipse cx="32.9" cy="25.5" rx="4.9" ry="1.35" fill="url(#rpp)" transform="rotate(62.4 32.9 25.5)"/><ellipse cx="27.6" cy="15.5" rx="4.9" ry="2.12" fill="url(#rpp)" transform="rotate(62.4 27.6 15.5)"/><ellipse cx="37.7" cy="29.8" rx="4.9" ry="0.96" fill="url(#rpp)" transform="rotate(72.0 37.7 29.8)"/><ellipse cx="34.3" cy="19.2" rx="4.9" ry="1.74" fill="url(#rpp)" transform="rotate(72.0 34.3 19.2)"/><ellipse cx="40.8" cy="34.9" rx="3.4" ry="0.70" fill="url(#rpp)" transform="rotate(81.9 40.8 34.9)"/><ellipse cx="39.3" cy="24.0" rx="4.9" ry="1.35" fill="url(#rpp)" transform="rotate(81.9 39.3 24.0)"/><ellipse cx="37.7" cy="13.0" rx="4.9" ry="2.12" fill="url(#rpp)" transform="rotate(81.9 37.7 13.0)"/><ellipse cx="42.4" cy="29.3" rx="4.9" ry="0.96" fill="url(#rpp)" transform="rotate(91.9 42.4 29.3)"/><ellipse cx="42.8" cy="18.3" rx="4.9" ry="1.74" fill="url(#rpp)" transform="rotate(91.9 42.8 18.3)"/><ellipse cx="43.7" cy="35.0" rx="3.4" ry="0.70" fill="url(#rpp)" transform="rotate(101.8 43.7 35.0)"/><ellipse cx="45.9" cy="24.1" rx="4.9" ry="1.35" fill="url(#rpp)" transform="rotate(101.8 45.9 24.1)"/><ellipse cx="48.2" cy="13.3" rx="4.9" ry="2.12" fill="url(#rpp)" transform="rotate(101.8 48.2 13.3)"/><ellipse cx="47.1" cy="30.1" rx="4.9" ry="0.96" fill="url(#rpp)" transform="rotate(111.6 47.1 30.1)"/></g><rect x="0" y="43.5" width="52" height="8.5" fill="#270c47" opacity=".82"/><path d="M0 46.5L40 45.5L52 47V48.6L40 47L0 49Z" fill="#4a1d86" opacity=".55"/></svg></div>
<div class="a" style="left:375px;top:1223.0px;width:58px;height:58.0px;background:#fff;box-shadow:0 1px 2.5px rgba(0,0,0,.5),0 0 1px rgba(0,0,0,.35)"><svg class="a" style="left:3px;top:3px" width="52" height="52.0" viewBox="0 0 52 52.0" preserveAspectRatio="none"><defs><radialGradient id="ryg" cx="42.0" cy="43.0" r="60" gradientUnits="userSpaceOnUse"><stop offset="0" stop-color="#04050a"/><stop offset="0.3" stop-color="#2b2007"/><stop offset="1" stop-color="#6b4d10"/></radialGradient><linearGradient id="ryp" x1="0" y1="0" x2="1" y2="0"><stop offset="0" stop-color="#fdeb9f"/><stop offset="0.22" stop-color="#fdeb9f"/><stop offset="0.6" stop-color="#d3a53a"/><stop offset="1" stop-color="#2b2007"/></linearGradient><filter id="ryb" x="-20%" y="-20%" width="140%" height="140%"><feGaussianBlur stdDeviation=".35"/></filter></defs><rect width="52" height="52" fill="url(#ryg)"/><path d="M42.0 43.0L-26.9 92.8" stroke="#000" stroke-width="3.2" opacity=".55"/><path d="M42.0 43.0L-34.7 83.4" stroke="#d3a53a" stroke-width="2.0" opacity=".22"/><path d="M42.0 43.0L-40.8 73.2" stroke="#000" stroke-width="3.2" opacity=".55"/><path d="M42.0 43.0L-45.1 62.4" stroke="#d3a53a" stroke-width="2.0" opacity=".22"/><path d="M42.0 43.0L-47.5 51.1" stroke="#000" stroke-width="3.2" opacity=".55"/><path d="M42.0 43.0L-47.9 39.6" stroke="#d3a53a" stroke-width="2.0" opacity=".22"/><path d="M42.0 43.0L-46.3 28.2" stroke="#000" stroke-width="3.2" opacity=".55"/><path d="M42.0 43.0L-42.8 17.2" stroke="#d3a53a" stroke-width="2.0" opacity=".22"/><path d="M42.0 43.0L-37.5 6.7" stroke="#000" stroke-width="3.2" opacity=".55"/><path d="M42.0 43.0L-30.3 -3.0" stroke="#d3a53a" stroke-width="2.0" opacity=".22"/><path d="M42.0 43.0L-21.6 -11.7" stroke="#000" stroke-width="3.2" opacity=".55"/><path d="M42.0 43.0L-11.5 -19.2" stroke="#d3a53a" stroke-width="2.0" opacity=".22"/><path d="M42.0 43.0L-0.3 -25.3" stroke="#000" stroke-width="3.2" opacity=".55"/><path d="M42.0 43.0L12.0 -30.0" stroke="#d3a53a" stroke-width="2.0" opacity=".22"/><path d="M42.0 43.0L24.8 -33.0" stroke="#000" stroke-width="3.2" opacity=".55"/><path d="M42.0 43.0L38.1 -34.3" stroke="#d3a53a" stroke-width="2.0" opacity=".22"/><path d="M42.0 43.0L51.4 -34.0" stroke="#000" stroke-width="3.2" opacity=".55"/><path d="M42.0 43.0L64.5 -31.9" stroke="#d3a53a" stroke-width="2.0" opacity=".22"/><path d="M42.0 43.0L77.2 -28.2" stroke="#000" stroke-width="3.2" opacity=".55"/><path d="M42.0 43.0L89.0 -23.0" stroke="#d3a53a" stroke-width="2.0" opacity=".22"/><path d="M42.0 43.0L99.9 -16.3" stroke="#000" stroke-width="3.2" opacity=".55"/><path d="M42.0 43.0L109.4 -8.3" stroke="#d3a53a" stroke-width="2.0" opacity=".22"/><path d="M42.0 43.0L117.5 0.8" stroke="#000" stroke-width="3.2" opacity=".55"/><path d="M42.0 43.0L123.9 10.9" stroke="#d3a53a" stroke-width="2.0" opacity=".22"/><path d="M42.0 43.0L128.5 21.7" stroke="#000" stroke-width="3.2" opacity=".55"/><path d="M42.0 43.0L131.2 32.9" stroke="#d3a53a" stroke-width="2.0" opacity=".22"/><path d="M42.0 43.0L132.0 44.4" stroke="#000" stroke-width="3.2" opacity=".55"/><path d="M42.0 43.0L130.8 55.8" stroke="#d3a53a" stroke-width="2.0" opacity=".22"/><path d="M42.0 43.0L127.6 66.9" stroke="#000" stroke-width="3.2" opacity=".55"/><path d="M42.0 43.0L122.5 77.5" stroke="#d3a53a" stroke-width="2.0" opacity=".22"/><g filter="url(#ryb)"><ellipse cx="32.5" cy="43.4" rx="3.4" ry="0.70" fill="url(#ryp)" transform="rotate(357.4 32.5 43.4)"/><ellipse cx="19.7" cy="44.0" rx="4.9" ry="1.35" fill="url(#ryp)" transform="rotate(357.4 19.7 44.0)"/><ellipse cx="6.9" cy="44.6" rx="4.9" ry="2.12" fill="url(#ryp)" transform="rotate(357.4 6.9 44.6)"/><ellipse cx="26.2" cy="41.7" rx="4.9" ry="0.96" fill="url(#ryp)" transform="rotate(4.8 26.2 41.7)"/><ellipse cx="13.4" cy="40.6" rx="4.9" ry="1.74" fill="url(#ryp)" transform="rotate(4.8 13.4 40.6)"/><ellipse cx="32.8" cy="41.0" rx="3.4" ry="0.70" fill="url(#ryp)" transform="rotate(12.3 32.8 41.0)"/><ellipse cx="20.4" cy="38.3" rx="4.9" ry="1.35" fill="url(#ryp)" transform="rotate(12.3 20.4 38.3)"/><ellipse cx="8.0" cy="35.6" rx="4.9" ry="2.12" fill="url(#ryp)" transform="rotate(12.3 8.0 35.6)"/><ellipse cx="27.3" cy="37.7" rx="4.9" ry="0.96" fill="url(#ryp)" transform="rotate(19.9 27.3 37.7)"/><ellipse cx="15.5" cy="33.4" rx="4.9" ry="1.74" fill="url(#ryp)" transform="rotate(19.9 15.5 33.4)"/><ellipse cx="3.7" cy="29.2" rx="4.9" ry="2.51" fill="url(#ryp)" transform="rotate(19.9 3.7 29.2)"/><ellipse cx="33.9" cy="38.7" rx="3.4" ry="0.70" fill="url(#ryp)" transform="rotate(27.7 33.9 38.7)"/><ellipse cx="23.0" cy="33.0" rx="4.9" ry="1.35" fill="url(#ryp)" transform="rotate(27.7 23.0 33.0)"/><ellipse cx="12.0" cy="27.3" rx="4.9" ry="2.12" fill="url(#ryp)" transform="rotate(27.7 12.0 27.3)"/><ellipse cx="1.1" cy="21.5" rx="4.9" ry="2.90" fill="url(#ryp)" transform="rotate(27.7 1.1 21.5)"/><ellipse cx="29.8" cy="34.2" rx="4.9" ry="0.96" fill="url(#ryp)" transform="rotate(35.8 29.8 34.2)"/><ellipse cx="20.0" cy="27.1" rx="4.9" ry="1.74" fill="url(#ryp)" transform="rotate(35.8 20.0 27.1)"/><ellipse cx="10.2" cy="20.1" rx="4.9" ry="2.51" fill="url(#ryp)" transform="rotate(35.8 10.2 20.1)"/><ellipse cx="35.7" cy="36.9" rx="3.4" ry="0.70" fill="url(#ryp)" transform="rotate(44.3 35.7 36.9)"/><ellipse cx="27.3" cy="28.6" rx="4.9" ry="1.35" fill="url(#ryp)" transform="rotate(44.3 27.3 28.6)"/><ellipse cx="18.8" cy="20.4" rx="4.9" ry="2.12" fill="url(#ryp)" transform="rotate(44.3 18.8 20.4)"/><ellipse cx="10.3" cy="12.1" rx="4.9" ry="2.90" fill="url(#ryp)" transform="rotate(44.3 10.3 12.1)"/><ellipse cx="33.4" cy="31.5" rx="4.9" ry="0.96" fill="url(#ryp)" transform="rotate(53.2 33.4 31.5)"/><ellipse cx="26.5" cy="22.3" rx="4.9" ry="1.74" fill="url(#ryp)" transform="rotate(53.2 26.5 22.3)"/><ellipse cx="19.5" cy="13.0" rx="4.9" ry="2.51" fill="url(#ryp)" transform="rotate(53.2 19.5 13.0)"/><ellipse cx="38.1" cy="35.5" rx="3.4" ry="0.70" fill="url(#ryp)" transform="rotate(62.4 38.1 35.5)"/><ellipse cx="32.9" cy="25.5" rx="4.9" ry="1.35" fill="url(#ryp)" transform="rotate(62.4 32.9 25.5)"/><ellipse cx="27.6" cy="15.5" rx="4.9" ry="2.12" fill="url(#ryp)" transform="rotate(62.4 27.6 15.5)"/><ellipse cx="37.7" cy="29.8" rx="4.9" ry="0.96" fill="url(#ryp)" transform="rotate(72.0 37.7 29.8)"/><ellipse cx="34.3" cy="19.2" rx="4.9" ry="1.74" fill="url(#ryp)" transform="rotate(72.0 34.3 19.2)"/><ellipse cx="40.8" cy="34.9" rx="3.4" ry="0.70" fill="url(#ryp)" transform="rotate(81.9 40.8 34.9)"/><ellipse cx="39.3" cy="24.0" rx="4.9" ry="1.35" fill="url(#ryp)" transform="rotate(81.9 39.3 24.0)"/><ellipse cx="37.7" cy="13.0" rx="4.9" ry="2.12" fill="url(#ryp)" transform="rotate(81.9 37.7 13.0)"/><ellipse cx="42.4" cy="29.3" rx="4.9" ry="0.96" fill="url(#ryp)" transform="rotate(91.9 42.4 29.3)"/><ellipse cx="42.8" cy="18.3" rx="4.9" ry="1.74" fill="url(#ryp)" transform="rotate(91.9 42.8 18.3)"/><ellipse cx="43.7" cy="35.0" rx="3.4" ry="0.70" fill="url(#ryp)" transform="rotate(101.8 43.7 35.0)"/><ellipse cx="45.9" cy="24.1" rx="4.9" ry="1.35" fill="url(#ryp)" transform="rotate(101.8 45.9 24.1)"/><ellipse cx="48.2" cy="13.3" rx="4.9" ry="2.12" fill="url(#ryp)" transform="rotate(101.8 48.2 13.3)"/><ellipse cx="47.1" cy="30.1" rx="4.9" ry="0.96" fill="url(#ryp)" transform="rotate(111.6 47.1 30.1)"/></g><rect x="0" y="43.5" width="52" height="8.5" fill="#2b2007" opacity=".82"/><path d="M0 46.5L40 45.5L52 47V48.6L40 47L0 49Z" fill="#6b4d10" opacity=".55"/></svg></div>
<div class="a" style="left:375px;top:1305.6px;width:58px;height:35.3px;background:#fff;box-shadow:0 1px 2.5px rgba(0,0,0,.5),0 0 1px rgba(0,0,0,.35)"><svg class="a" style="left:3px;top:3px" width="52" height="29.3" viewBox="0 0 52 29.3" preserveAspectRatio="none"><defs><linearGradient id="f1" x1="0" y1="0" x2="0" y2="1"><stop offset="0" stop-color="#c9bcd2"/><stop offset="0.5" stop-color="#e6d5d8"/><stop offset="0.8" stop-color="#d8c4cb"/><stop offset="1" stop-color="#c8b6c2"/></linearGradient><filter id="fbz"><feGaussianBlur stdDeviation="1.2"/></filter></defs><rect width="52" height="29" fill="url(#f1)"/><ellipse cx="47" cy="16.5" rx="4" ry="1.4" fill="#fbeff0" filter="url(#fbz)"/><path d="M5.5 16.8L13 15.3L19 14.6L24 15L36.5 15L39.5 8.8L42.5 8.6L41.8 15.2L44.5 15.8V17.4L38 18L30 18.6L22 18.2L12 17.6Z" fill="#665c80"/><path d="M20 17.6L27 19.8L33 19.4L30 17.8Z" fill="#4d4566"/><path d="M39.8 9.6L41.8 9.5L41.5 12L39 12Z" fill="#9a5878"/><path d="M14.5 6.4L17.5 5.8L20.5 5.9L21.8 4L22.8 4L22.4 6L23.4 6.4L20 7L16.5 6.9Z" fill="#6b6186"/><rect x="47.5" y="26.3" width="3" height=".8" fill="#f3eaea"/></svg></div>
<div class="a" style="left:375px;top:1377.7px;width:58px;height:35.3px;background:#fff;box-shadow:0 1px 2.5px rgba(0,0,0,.5),0 0 1px rgba(0,0,0,.35)"><svg class="a" style="left:3px;top:3px" width="52" height="29.3" viewBox="0 0 52 29.3" preserveAspectRatio="none"><rect width="52" height="29" fill="#f7f5f1"/><rect x=".3" y=".3" width="51.4" height="28.4" fill="none" stroke="#b5b5b3" stroke-width=".6"/><rect x="19.8" y="2.6" width="11" height="11.5" fill="none" stroke="#b8b8b6" stroke-width=".55"/><path d="M19.8 6.5H30.8M25.3 2.6V6.5" stroke="#c2c2c0" stroke-width=".45"/><g fill="#141414"><path d="M28.5 17.5Q29 13.2 32 12.6Q35.2 13.4 35.2 17Q36.4 21 35.6 25.8H27.6Q27.4 21 28.5 17.5Z"/><ellipse cx="20" cy="23.6" rx="3.4" ry="2.6"/><ellipse cx="16.8" cy="22" rx="1.6" ry="2.2"/><path d="M15.4 12.6L16 18.5L17 18.5L16.6 12.6ZM18.5 14L18.2 19L19.2 19L19.4 14Z"/><rect x="14.5" y="24.6" width="22" height="1.3"/></g><g fill="#f7f5f1"><circle cx="31.4" cy="15.4" r="1.5"/><ellipse cx="30" cy="12.2" rx="2.6" ry=".7" transform="rotate(-14 30 12.2)"/></g><path d="M27.6 11.8Q30.5 9.6 34.6 11.8" stroke="#141414" stroke-width=".9" fill="none"/></svg></div>
<div class="a" style="left:375px;top:1444.8px;width:58px;height:45.8px;background:#fff;box-shadow:0 1px 2.5px rgba(0,0,0,.5),0 0 1px rgba(0,0,0,.35)"><svg class="a" style="left:3px;top:3px" width="52" height="39.8" viewBox="0 0 52 39.8" preserveAspectRatio="none"><defs><linearGradient id="g1" x1="0" y1="0" x2="0" y2="1"><stop offset="0" stop-color="#233a56"/><stop offset="0.45" stop-color="#34557a"/><stop offset="0.72" stop-color="#4a7192"/><stop offset="1" stop-color="#7a96ad"/></linearGradient></defs><rect width="52" height="40" fill="url(#g1)"/><path d="M0 6Q20 3 52 8" stroke="#2d4d72" stroke-width="1.4" fill="none" opacity=".6"/><path d="M0 32L4 29.6L8 27.8L12 29L16 31L20 32L24 30L28 28L32 27.2L36 28.6L40 30.6L44 29.4L48 30.4L52 32V37.4H0Z" fill="#a9bccb"/><path d="M8 27.8L10.5 32L6 34ZM32 27.2L35 31.5L28.5 34ZM44 29.4L46.5 33L42 34.5ZM20 32L22.5 34.5H17Z" fill="#7e98ae" opacity=".85"/><rect x="0" y="35.4" width="52" height="2" fill="#96adc0"/><rect x="0" y="37.2" width="52" height="2.8" fill="#6f8da6"/></svg></div>
<div class="a" style="left:375px;top:1519.6px;width:58px;height:40.0px;background:#fff;box-shadow:0 1px 2.5px rgba(0,0,0,.5),0 0 1px rgba(0,0,0,.35)"><svg class="a" style="left:3px;top:3px" width="52" height="34.0" viewBox="0 0 52 34.0" preserveAspectRatio="none"><defs><linearGradient id="d1" x1="0" y1="0" x2="1" y2="1"><stop offset="0" stop-color="#4a362e"/><stop offset="0.35" stop-color="#7a5c4b"/><stop offset="0.6" stop-color="#8c6b58"/><stop offset="1" stop-color="#553e34"/></linearGradient><filter id="db"><feGaussianBlur stdDeviation=".7"/></filter></defs><rect width="52" height="34" fill="url(#d1)"/><g filter="url(#db)"><path d="M26 0L52 0V9Q40 8 26 0Z" fill="#5a4136"/><ellipse cx="41.5" cy="14" rx="5.5" ry="1.5" fill="#b39a86" transform="rotate(14 41.5 14)"/><ellipse cx="37" cy="8.5" rx="2.6" ry=".9" fill="#a58b78" transform="rotate(14 37 8.5)"/><ellipse cx="16" cy="25" rx="2.6" ry="1.2" fill="#9d8371"/><path d="M0 22Q10 30 22 34H0Z" fill="#4a362e"/></g><path d="M4 2.8L49 31.5" stroke="#9c8371" stroke-width="1.7"/><path d="M4.6 2.2L49.6 30.9" stroke="#1c2024" stroke-width="1.1"/></svg></div>
<div class="a" style="left:375px;top:1591.7px;width:58px;height:40.0px;background:#fff;box-shadow:0 1px 2.5px rgba(0,0,0,.5),0 0 1px rgba(0,0,0,.35)"><svg class="a" style="left:3px;top:3px" width="52" height="34.0" viewBox="0 0 52 34.0" preserveAspectRatio="none"><defs><linearGradient id="a1" x1="0" y1="0" x2="0" y2="1"><stop offset="0" stop-color="#b5c6da"/><stop offset="0.6" stop-color="#d6dee8"/><stop offset="1" stop-color="#c4cdd6"/></linearGradient><filter id="ab"><feGaussianBlur stdDeviation="1.1"/></filter></defs><rect width="52" height="40" fill="url(#a1)"/><rect x="27" y="0" width="13" height="2.4" fill="#5c87c2" filter="url(#ab)"/><g fill="#f3f5f8" filter="url(#ab)"><ellipse cx="12" cy="5" rx="11" ry="3.4"/><ellipse cx="40" cy="8" rx="11" ry="3"/><ellipse cx="26" cy="11" rx="9" ry="2"/></g><rect x="0" y="22.6" width="52" height="1.4" fill="#6d7466"/><rect x="0" y="23.8" width="52" height="17" fill="#8c9853"/><rect x="0" y="23.8" width="52" height="2.2" fill="#a0a868"/><rect x="6" y="21.6" width="8" height="1.2" fill="#c2524a"/><path d="M9.5 16.2Q10 15 13 15L40 15.4Q44.5 15.8 45.2 17.4Q44 18.8 39 18.8L14 18.4Q10 18 9.5 16.2Z" fill="#f4f5f7"/><path d="M12 17.6L42 18Q40 19 38 19L14 18.6Z" fill="#2c3550"/><path d="M9.8 9.6L12 9.4L15.6 15.2L10.6 15.2Z" fill="#e9ecf2"/><path d="M10 10.6L11.8 10.4L13.4 13L10.8 13.2Z" fill="#c8323c"/><path d="M10.6 13.2L13.4 13L14.6 15L10.7 15Z" fill="#28407e"/><path d="M22 18.5L30 20.6L34 20.2L29 18.4Z" fill="#8e96a6"/><ellipse cx="27" cy="20.4" rx="1.6" ry=".9" fill="#3a4258"/><ellipse cx="33" cy="20.2" rx="1.4" ry=".8" fill="#3a4258"/></svg></div>
<span class="t" style="left:450.90px;top:481.00px;font-size:32.5px;color:#262626;letter-spacing:1.9px;-webkit-text-stroke:.3px #262626">89</span>
<svg class="a" style="left:497.95px;top:480.04px" width="31.00" height="32.00" viewBox="0 -880 1000 1000" preserveAspectRatio="none"><path transform="scale(1,-1)" fill="#262626" stroke="#262626" stroke-width="8" d="M459 839V676H133V602H459V429H62V355H416C326 226 174 101 34 39C51 24 76 -5 89 -24C221 44 362 163 459 296V-80H538V300C636 166 778 42 911 -25C924 -5 949 25 966 40C826 101 673 226 581 355H942V429H538V602H874V676H538V839Z"/></svg>
<svg class="a" style="left:530.80px;top:480.04px" width="31.00" height="32.00" viewBox="0 -880 1000 1000" preserveAspectRatio="none"><path transform="scale(1,-1)" fill="#262626" stroke="#262626" stroke-width="8" d="M457 840V701H162V370H52V297H425C381 173 277 60 43 -16C57 -32 78 -63 85 -81C344 5 455 135 502 278C578 93 713 -26 923 -78C934 -57 956 -27 972 -10C771 31 640 137 570 297H949V370H846V701H533V840ZM237 370V628H457V520C457 470 454 420 445 370ZM768 370H523C531 419 533 469 533 519V628H768Z"/></svg>
<span class="t" style="left:106.90px;top:24.00px;font-size:27px;font-weight:700;color:#e8e8e8;letter-spacing:-0.239px;text-shadow:0 1px 2px rgba(0,0,0,.25);">Finder</span>
<span class="t" style="left:229.75px;top:24.00px;font-size:27px;font-weight:400;color:#e8e8e8;letter-spacing:-0.080px;text-shadow:0 1px 2px rgba(0,0,0,.25);">File</span>
<span class="t" style="left:313.75px;top:24.00px;font-size:27px;font-weight:400;color:#e8e8e8;letter-spacing:0.076px;text-shadow:0 1px 2px rgba(0,0,0,.25);">Edit</span>
<span class="t" style="left:403.00px;top:24.00px;font-size:27px;font-weight:400;color:#e8e8e8;letter-spacing:-0.345px;text-shadow:0 1px 2px rgba(0,0,0,.25);">View</span>
<span class="t" style="left:502.75px;top:24.00px;font-size:27px;font-weight:400;color:#e8e8e8;letter-spacing:-1.501px;text-shadow:0 1px 2px rgba(0,0,0,.25);">Go</span>
<span class="t" style="left:579.50px;top:24.00px;font-size:27px;font-weight:400;color:#e8e8e8;letter-spacing:-0.456px;text-shadow:0 1px 2px rgba(0,0,0,.25);">Window</span>
<span class="t" style="left:715.00px;top:24.00px;font-size:27px;font-weight:400;color:#e8e8e8;letter-spacing:0.579px;text-shadow:0 1px 2px rgba(0,0,0,.25);">Help</span>
<span class="t" style="left:497.30px;top:112.00px;font-size:30.5px;font-weight:700;color:#444546;letter-spacing:-0.380px;transform:scaleY(0.975);transform-origin:0 26px;">Wallpapers</span>
<span class="t" style="left:413.78px;top:195.00px;font-size:23.2px;font-weight:400;color:#787878;letter-spacing:-0.154px;transform:scaleY(0.94);transform-origin:0 19px;">Folders</span>
<span class="t" style="left:414.14px;top:746.00px;font-size:22.5px;font-weight:700;color:#878787;letter-spacing:-0.006px;transform:scaleY(1.06);transform-origin:0 18px;">Images</span>
<span class="t" style="left:450.30px;top:265.00px;font-size:32.5px;font-weight:400;color:#262626;letter-spacing:0.207px;-webkit-text-stroke:.3px #262626;">Mobile</span>
<span class="t" style="left:450.30px;top:337.00px;font-size:32.5px;font-weight:400;color:#262626;letter-spacing:-0.869px;-webkit-text-stroke:.3px #262626;">macOS</span>
<span class="t" style="left:450.30px;top:409.00px;font-size:32.5px;font-weight:400;color:#262626;letter-spacing:-0.221px;-webkit-text-stroke:.3px #262626;">Basic Apple Guy</span>
<span class="t" style="left:450.30px;top:553.00px;font-size:32.5px;font-weight:400;color:#262626;letter-spacing:-0.155px;-webkit-text-stroke:.3px #262626;">iCloud Beta Wallpapers</span>
<span class="t" style="left:452.30px;top:625.00px;font-size:32.5px;font-weight:400;color:#262626;letter-spacing:-0.348px;-webkit-text-stroke:.3px #262626;">Windows</span>
<span class="t" style="left:450.30px;top:803.00px;font-size:32.5px;font-weight:400;color:#262626;letter-spacing:-0.091px;-webkit-text-stroke:.3px #262626;">Mustard_TGV.png</span>
<span class="t" style="left:452.30px;top:875.00px;font-size:32.5px;font-weight:400;color:#262626;letter-spacing:-0.156px;-webkit-text-stroke:.3px #262626;">ANA Beyond.jpg</span>
<span class="t" style="left:450.30px;top:947.00px;font-size:32.5px;font-weight:400;color:#262626;letter-spacing:-0.045px;-webkit-text-stroke:.3px #262626;">New Bliss.png</span>
<span class="t" style="left:450.30px;top:1019.00px;font-size:32.5px;font-weight:400;color:#262626;letter-spacing:-0.322px;-webkit-text-stroke:.3px #262626;">MBA15_Radial-Blue.jpeg</span>
<span class="t" style="left:450.30px;top:1091.00px;font-size:32.5px;font-weight:400;color:#262626;letter-spacing:-0.324px;-webkit-text-stroke:.3px #262626;">MBA15_Radial-Green.jpeg</span>
<span class="t" style="left:450.30px;top:1163.00px;font-size:32.5px;font-weight:400;color:#262626;letter-spacing:-0.207px;-webkit-text-stroke:.3px #262626;">MBA15_Radial-Purple.jpeg</span>
<span class="t" style="left:450.30px;top:1235.00px;font-size:32.5px;font-weight:400;color:#262626;letter-spacing:-0.373px;-webkit-text-stroke:.3px #262626;">MBA15_Radial-Yellow.jpeg</span>
<div class="a" style="left:440px;top:1290px;width:494px;height:66px;overflow:hidden"><span class="t" style="left:10.30px;top:17.00px;font-size:32.5px;font-weight:400;color:#262626;letter-spacing:0.080px;-webkit-text-stroke:.3px #262626;">Mustard_McDonnell Douglas F-15</span></div>
<span class="t" style="left:450.30px;top:1379.00px;font-size:32.5px;font-weight:400;color:#262626;letter-spacing:-0.092px;-webkit-text-stroke:.3px #262626;">Notion Lo-Fi Girl.JPG</span>
<span class="t" style="left:451.30px;top:1451.00px;font-size:32.5px;font-weight:400;color:#262626;letter-spacing:-0.239px;-webkit-text-stroke:.3px #262626;">glacier 1.jpg</span>
<span class="t" style="left:451.30px;top:1523.00px;font-size:32.5px;font-weight:400;color:#262626;letter-spacing:-0.023px;-webkit-text-stroke:.3px #262626;">desert 7.jpg</span>
<span class="t" style="left:452.30px;top:1595.00px;font-size:32.5px;font-weight:400;color:#262626;letter-spacing:0.144px;-webkit-text-stroke:.3px #262626;">A380 British Airways 2.jpg</span>
<span class="t" style="left:32.30px;top:190.00px;font-size:22.5px;font-weight:700;color:#001c18;letter-spacing:-0.104px;opacity:0.36;transform:scaleY(1.07);transform-origin:0 18px;">Favorites</span>
<span class="t" style="left:32.30px;top:702.00px;font-size:22.5px;font-weight:700;color:#071b22;letter-spacing:-0.148px;opacity:0.36;transform:scaleY(1.07);transform-origin:0 18px;">iCloud</span>
<span class="t" style="left:32.30px;top:878.00px;font-size:22.5px;font-weight:700;color:#091b25;letter-spacing:-0.081px;opacity:0.36;transform:scaleY(1.07);transform-origin:0 18px;">Locations</span>
<span class="t" style="left:33.30px;top:998.00px;font-size:22.5px;font-weight:700;color:#0b1b27;letter-spacing:-0.344px;opacity:0.36;transform:scaleY(1.07);transform-origin:0 18px;">Tags</span>
<span class="t" style="left:81.00px;top:233.00px;font-size:27.3px;font-weight:400;color:#011c19;letter-spacing:-0.258px;opacity:0.345;-webkit-text-stroke:.3px #011c19;">AirDrop</span>
<span class="t" style="left:79.00px;top:289.00px;font-size:27.3px;font-weight:400;color:#011c1a;letter-spacing:0.291px;opacity:0.345;-webkit-text-stroke:.3px #011c1a;">Desktop</span>
<span class="t" style="left:81.00px;top:345.00px;font-size:27.3px;font-weight:400;color:#021c1b;letter-spacing:0.096px;opacity:0.345;-webkit-text-stroke:.3px #021c1b;">Applications</span>
<span class="t" style="left:79.00px;top:401.00px;font-size:27.3px;font-weight:400;color:#031c1c;letter-spacing:0.124px;opacity:0.345;-webkit-text-stroke:.3px #031c1c;">Documents</span>
<span class="t" style="left:79.00px;top:457.00px;font-size:27.3px;font-weight:400;color:#041c1d;letter-spacing:-0.100px;opacity:0.345;-webkit-text-stroke:.3px #041c1d;">Downloads</span>
<span class="t" style="left:79.00px;top:513.00px;font-size:27.3px;font-weight:400;color:#041b1e;letter-spacing:-0.023px;opacity:0.345;-webkit-text-stroke:.3px #041b1e;">Movies</span>
<span class="t" style="left:79.00px;top:569.00px;font-size:27.3px;font-weight:400;color:#051b1f;letter-spacing:0.317px;opacity:0.345;-webkit-text-stroke:.3px #051b1f;">Music</span>
<span class="t" style="left:79.00px;top:625.00px;font-size:27.3px;font-weight:400;color:#061b20;letter-spacing:0.235px;opacity:0.345;-webkit-text-stroke:.3px #061b20;">Pictures</span>
<span class="t" style="left:80.00px;top:745.00px;font-size:27.3px;font-weight:400;color:#081b22;letter-spacing:-0.053px;opacity:0.345;-webkit-text-stroke:.3px #081b22;">iCloud Drive</span>
<span class="t" style="left:80.00px;top:801.00px;font-size:27.3px;font-weight:400;color:#081b23;letter-spacing:-0.428px;opacity:0.345;-webkit-text-stroke:.3px #081b23;">Shared</span>
<span class="t" style="left:79.00px;top:921.00px;font-size:27.3px;font-weight:400;color:#0a1b26;letter-spacing:0.273px;opacity:0.345;-webkit-text-stroke:.3px #0a1b26;">Network</span>
<span class="t" style="left:80.00px;top:1041.00px;font-size:27.3px;font-weight:400;color:#0c1b28;letter-spacing:-0.004px;opacity:0.345;-webkit-text-stroke:.3px #0c1b28;">Ongoing</span>
<span class="t" style="left:79.00px;top:1097.00px;font-size:27.3px;font-weight:400;color:#0c1a29;letter-spacing:-0.056px;opacity:0.345;-webkit-text-stroke:.3px #0c1a29;">Finished</span>
<span class="t" style="left:79.00px;top:1153.00px;font-size:27.3px;font-weight:400;color:#0d1a2a;letter-spacing:-0.520px;opacity:0.345;-webkit-text-stroke:.3px #0d1a2a;">Paused</span>
<span class="t" style="left:79.00px;top:1209.00px;font-size:27.3px;font-weight:400;color:#0e1a2b;letter-spacing:-1.080px;opacity:0.345;-webkit-text-stroke:.3px #0e1a2b;">U R G E N T</span>
<span class="t" style="left:79.00px;top:1265.00px;font-size:27.3px;font-weight:400;color:#0f1a2c;letter-spacing:0.012px;opacity:0.345;-webkit-text-stroke:.3px #0f1a2c;">DDL within 7</span>
<span class="t" style="left:79.00px;top:1321.00px;font-size:27.3px;font-weight:400;color:#0f1a2d;letter-spacing:-0.225px;opacity:0.345;-webkit-text-stroke:.3px #0f1a2d;">DDL within 14</span>
<span class="t" style="left:79.00px;top:1377.00px;font-size:27.3px;font-weight:400;color:#101a2e;letter-spacing:0.193px;opacity:0.345;-webkit-text-stroke:.3px #101a2e;">DDL within 30</span>
<div class="a" id="panel"></div><div class="a" id="ptitle"></div>
<div class="sep" style="top:306.0px"></div>
<div class="sep" style="top:418.2px"></div>
<div class="sep" style="top:532.3px"></div>
<div class="sep" style="top:1242.0px"></div>
<div class="sep" style="top:1424.3px"></div>
<div class="a" style="left:943.9px;top:277.9px;width:18px;height:18px;border-radius:50%;background:#ed6a5e;box-shadow:inset 0 0 0 .8px #d9544a"></div>
<div class="cb on" style="left:974.0px;top:332.0px"><svg width="24" height="24" viewBox="0 0 24 24" style="position:absolute;left:0;top:0"><path d="M5.3 12.4L10.5 18.2L18.5 6.4" fill="none" stroke="#fff" stroke-width="3.2" stroke-linecap="round" stroke-linejoin="round"/></svg></div>
<div class="cb on" style="left:994.0px;top:376.0px"><svg width="24" height="24" viewBox="0 0 24 24" style="position:absolute;left:0;top:0"><path d="M5.3 12.4L10.5 18.2L18.5 6.4" fill="none" stroke="#fff" stroke-width="3.2" stroke-linecap="round" stroke-linejoin="round"/></svg></div>
<div class="cb dis" style="left:974.0px;top:760.0px"></div>
<div class="cb dis" style="left:974.0px;top:800.0px"></div>
<div class="cb dis" style="left:974.0px;top:840.0px"></div>
<div class="cb off" style="left:974.0px;top:880.0px"></div>
<div class="cb off" style="left:974.0px;top:920.0px"></div>
<div class="cb off" style="left:974.0px;top:960.0px"></div>
<div class="cb off" style="left:974.0px;top:1000.0px"></div>
<div class="cb on" style="left:974.0px;top:1040.0px"><svg width="24" height="24" viewBox="0 0 24 24" style="position:absolute;left:0;top:0"><path d="M5.3 12.4L10.5 18.2L18.5 6.4" fill="none" stroke="#fff" stroke-width="3.2" stroke-linecap="round" stroke-linejoin="round"/></svg></div>
<div class="cb on" style="left:974.0px;top:1080.0px"><svg width="24" height="24" viewBox="0 0 24 24" style="position:absolute;left:0;top:0"><path d="M5.3 12.4L10.5 18.2L18.5 6.4" fill="none" stroke="#fff" stroke-width="3.2" stroke-linecap="round" stroke-linejoin="round"/></svg></div>
<div class="cb off" style="left:974.0px;top:1120.0px"></div>
<div class="cb off" style="left:974.0px;top:1160.0px"></div>
<div class="cb off" style="left:974.0px;top:1200.0px"></div>
<div class="cb on" style="left:974.0px;top:1262.0px"><svg width="24" height="24" viewBox="0 0 24 24" style="position:absolute;left:0;top:0"><path d="M5.3 12.4L10.5 18.2L18.5 6.4" fill="none" stroke="#fff" stroke-width="3.2" stroke-linecap="round" stroke-linejoin="round"/></svg></div>
<div class="cb on" style="left:974.0px;top:1302.0px"><svg width="24" height="24" viewBox="0 0 24 24" style="position:absolute;left:0;top:0"><path d="M5.3 12.4L10.5 18.2L18.5 6.4" fill="none" stroke="#fff" stroke-width="3.2" stroke-linecap="round" stroke-linejoin="round"/></svg></div>
<div class="cb on" style="left:974.0px;top:1342.0px"><svg width="24" height="24" viewBox="0 0 24 24" style="position:absolute;left:0;top:0"><path d="M5.3 12.4L10.5 18.2L18.5 6.4" fill="none" stroke="#fff" stroke-width="3.2" stroke-linecap="round" stroke-linejoin="round"/></svg></div>
<div class="dd" style="left:1128px;top:436px;width:238px"></div><div class="st" style="left:1338.3px;top:440px"><svg width="23.5" height="24" viewBox="-11.75 -12 23.5 24" style="position:absolute;left:0;top:0"><path d="M-4.6 -2.7L0 -6.8L4.6 -2.7M-4.6 2.7L0 6.8L4.6 2.7" fill="none" stroke="#fff" stroke-width="2.3" stroke-linecap="round" stroke-linejoin="round"/></svg></div>
<div class="dd" style="left:1128px;top:484.2px;width:238px"></div><div class="st" style="left:1338.3px;top:488.2px"><svg width="23.5" height="24" viewBox="-11.75 -12 23.5 24" style="position:absolute;left:0;top:0"><path d="M-4.6 -2.7L0 -6.8L4.6 -2.7M-4.6 2.7L0 6.8L4.6 2.7" fill="none" stroke="#fff" stroke-width="2.3" stroke-linecap="round" stroke-linejoin="round"/></svg></div>
<div class="dd" style="left:1089px;top:674px;width:128px"></div><div class="st" style="left:1189.3px;top:678px"><svg width="23.5" height="24" viewBox="-11.75 -12 23.5 24" style="position:absolute;left:0;top:0"><path d="M-4.6 -2.7L0 -6.8L4.6 -2.7M-4.6 2.7L0 6.8L4.6 2.7" fill="none" stroke="#fff" stroke-width="2.3" stroke-linecap="round" stroke-linejoin="round"/></svg></div>
<svg class="a" style="left:1125.60px;top:584.00px;filter:drop-shadow(0 1px 1.3px rgba(0,0,0,.36))" width="25.0" height="28.2" viewBox="0 0 25.0 28.2"><defs><linearGradient id="ds" x1="0" y1="1" x2="1" y2="0"><stop offset="0" stop-color="#fcfcfc"/><stop offset="1" stop-color="#e9e9e9"/></linearGradient><linearGradient id="dsf" x1="0" y1="1" x2="1" y2="0"><stop offset="0" stop-color="#e4e4e4"/><stop offset="0.35" stop-color="#f7f7f7"/><stop offset="1" stop-color="#ffffff"/></linearGradient><filter id="dsb" x="-50%" y="-50%" width="200%" height="200%"><feGaussianBlur stdDeviation="0.64"/></filter><clipPath id="dsc"><path d="M0 2 Q0 0 2 0 H15.8 L25 9.2 V26.2 Q25 28.2 23 28.2 H2 Q0 28.2 0 26.2 Z"/></clipPath></defs><path fill="url(#ds)" d="M0 2 Q0 0 2 0 H15.8 L25 9.2 V26.2 Q25 28.2 23 28.2 H2 Q0 28.2 0 26.2 Z"/><g clip-path="url(#dsc)"><path d="M15.8 0 V7.2 Q15.8 9.2 17.8 9.2 H25 Z" fill="#000" opacity=".38" filter="url(#dsb)" transform="translate(-0.74 0.74)"/></g><path fill="url(#dsf)" d="M15.8 0 V7.2 Q15.8 9.2 17.8 9.2 H25 Z"/></svg>
<svg class="a" style="left:1205.60px;top:554.00px;filter:drop-shadow(0 1px 1.3px rgba(0,0,0,.36))" width="44.8" height="56.0" viewBox="0 0 44.8 56.0"><defs><linearGradient id="dl" x1="0" y1="1" x2="1" y2="0"><stop offset="0" stop-color="#fcfcfc"/><stop offset="1" stop-color="#e9e9e9"/></linearGradient><linearGradient id="dlf" x1="0" y1="1" x2="1" y2="0"><stop offset="0" stop-color="#e4e4e4"/><stop offset="0.35" stop-color="#f7f7f7"/><stop offset="1" stop-color="#ffffff"/></linearGradient><filter id="dlb" x="-50%" y="-50%" width="200%" height="200%"><feGaussianBlur stdDeviation="1.19"/></filter><clipPath id="dlc"><path d="M0 2.6 Q0 0 2.6 0 H27.8 L44.8 17 V53.4 Q44.8 56 42.2 56 H2.6 Q0 56 0 53.4 Z"/></clipPath></defs><path fill="url(#dl)" d="M0 2.6 Q0 0 2.6 0 H27.8 L44.8 17 V53.4 Q44.8 56 42.2 56 H2.6 Q0 56 0 53.4 Z"/><g clip-path="url(#dlc)"><path d="M27.8 0 V14.4 Q27.8 17 30.4 17 H44.8 Z" fill="#000" opacity=".38" filter="url(#dlb)" transform="translate(-1.36 1.36)"/></g><path fill="url(#dlf)" d="M27.8 0 V14.4 Q27.8 17 30.4 17 H44.8 Z"/></svg>
<div class="rd" style="left:1126px;top:630px;background:#fff;box-shadow:inset 0 0 0 1px #c7c8c9,inset 0 1.5px 1.5px rgba(0,0,0,.08)"></div>
<div class="rd" style="left:1216px;top:630px;background:linear-gradient(180deg,#4f96f9 0%,#3a80f3 50%,#2e6de9 100%);box-shadow:0 .5px 1px rgba(0,0,0,.25)"><div style="position:absolute;left:7.4px;top:7.4px;width:9.2px;height:9.2px;border-radius:50%;background:#fff"></div></div>
<div class="dd" style="left:1052.6px;top:1441.6px;width:234.8px;height:32.7px"></div>
<span class="t" style="left:1112.90px;top:275.00px;font-size:23px;font-weight:400;color:#4b4c4d;letter-spacing:0.023px;-webkit-text-stroke:.22px #4b4c4d;transform:scaleY(0.935);transform-origin:0 19px;">Wallpapers</span>
<span class="t" style="left:1006.60px;top:333.00px;font-size:23px;font-weight:400;color:#262626;letter-spacing:0.148px;-webkit-text-stroke:.22px #262626;transform:scaleY(0.935);transform-origin:0 19px;">Always open in list view</span>
<span class="t" style="left:1026.00px;top:377.00px;font-size:23px;font-weight:400;color:#262626;letter-spacing:0.151px;-webkit-text-stroke:.22px #262626;transform:scaleY(0.935);transform-origin:0 19px;">Browse in list view</span>
<span class="t" style="left:974.00px;top:441.00px;font-size:23px;font-weight:400;color:#262626;letter-spacing:0.106px;-webkit-text-stroke:.22px #262626;transform:scaleY(0.935);transform-origin:0 19px;">Group By:</span>
<span class="t" style="left:1139.46px;top:441.00px;font-size:23px;font-weight:400;color:#262626;letter-spacing:0.266px;-webkit-text-stroke:.22px #262626;transform:scaleY(0.935);transform-origin:0 19px;">Kind</span>
<span class="t" style="left:974.00px;top:489.00px;font-size:23px;font-weight:400;color:#262626;letter-spacing:0.370px;-webkit-text-stroke:.22px #262626;transform:scaleY(0.935);transform-origin:0 19px;">Sort By:</span>
<span class="t" style="left:1139.46px;top:489.00px;font-size:23px;font-weight:400;color:#262626;letter-spacing:0.424px;-webkit-text-stroke:.22px #262626;transform:scaleY(0.935);transform-origin:0 19px;">Date Modified</span>
<span class="t" style="left:973.00px;top:589.00px;font-size:23px;font-weight:400;color:#262626;letter-spacing:0.332px;-webkit-text-stroke:.22px #262626;transform:scaleY(0.935);transform-origin:0 19px;">Icon size:</span>
<span class="t" style="left:975.00px;top:679.00px;font-size:23px;font-weight:400;color:#262626;letter-spacing:0.170px;-webkit-text-stroke:.22px #262626;transform:scaleY(0.935);transform-origin:0 19px;">Text size:</span>
<span class="t" style="left:1100.75px;top:679.00px;font-size:23px;font-weight:400;color:#262626;letter-spacing:-1.292px;-webkit-text-stroke:.22px #262626;transform:scaleY(0.935);transform-origin:0 19px;">16</span>
<span class="t" style="left:973.50px;top:725.00px;font-size:23px;font-weight:400;color:#262626;letter-spacing:0.089px;-webkit-text-stroke:.22px #262626;transform:scaleY(0.935);transform-origin:0 19px;">Show Columns:</span>
<span class="t" style="left:1005.80px;top:761.00px;font-size:23px;font-weight:400;color:#b4b5b6;letter-spacing:0.242px;-webkit-text-stroke:.22px #b4b5b6;transform:scaleY(0.935);transform-origin:0 19px;">iCloud Status</span>
<span class="t" style="left:1005.80px;top:801.00px;font-size:23px;font-weight:400;color:#b4b5b6;letter-spacing:0.245px;-webkit-text-stroke:.22px #b4b5b6;transform:scaleY(0.935);transform-origin:0 19px;">Last Modified By</span>
<span class="t" style="left:1005.80px;top:841.00px;font-size:23px;font-weight:400;color:#b4b5b6;letter-spacing:-0.306px;-webkit-text-stroke:.22px #b4b5b6;transform:scaleY(0.935);transform-origin:0 19px;">Shared By</span>
<span class="t" style="left:1005.80px;top:881.00px;font-size:23px;font-weight:400;color:#262626;letter-spacing:0.407px;-webkit-text-stroke:.22px #262626;transform:scaleY(0.935);transform-origin:0 19px;">Date Modified</span>
<span class="t" style="left:1005.80px;top:921.00px;font-size:23px;font-weight:400;color:#262626;letter-spacing:0.172px;-webkit-text-stroke:.22px #262626;transform:scaleY(0.935);transform-origin:0 19px;">Date Created</span>
<span class="t" style="left:1005.80px;top:961.00px;font-size:23px;font-weight:400;color:#262626;letter-spacing:0.140px;-webkit-text-stroke:.22px #262626;transform:scaleY(0.935);transform-origin:0 19px;">Date Last Opened</span>
<span class="t" style="left:1005.80px;top:1001.00px;font-size:23px;font-weight:400;color:#262626;letter-spacing:0.328px;-webkit-text-stroke:.22px #262626;transform:scaleY(0.935);transform-origin:0 19px;">Date Added</span>
<span class="t" style="left:1005.80px;top:1041.00px;font-size:23px;font-weight:400;color:#262626;letter-spacing:-0.250px;-webkit-text-stroke:.22px #262626;transform:scaleY(0.935);transform-origin:0 19px;">Size</span>
<span class="t" style="left:1005.80px;top:1081.00px;font-size:23px;font-weight:400;color:#262626;letter-spacing:0.253px;-webkit-text-stroke:.22px #262626;transform:scaleY(0.935);transform-origin:0 19px;">Kind</span>
<span class="t" style="left:1006.80px;top:1121.00px;font-size:23px;font-weight:400;color:#262626;letter-spacing:0.046px;-webkit-text-stroke:.22px #262626;transform:scaleY(0.935);transform-origin:0 19px;">Version</span>
<span class="t" style="left:1005.80px;top:1161.00px;font-size:23px;font-weight:400;color:#262626;letter-spacing:0.062px;-webkit-text-stroke:.22px #262626;transform:scaleY(0.935);transform-origin:0 19px;">Comments</span>
<span class="t" style="left:1006.80px;top:1201.00px;font-size:23px;font-weight:400;color:#262626;letter-spacing:-0.194px;-webkit-text-stroke:.22px #262626;transform:scaleY(0.935);transform-origin:0 19px;">Tags</span>
<span class="t" style="left:1005.80px;top:1263.00px;font-size:23px;font-weight:400;color:#262626;letter-spacing:0.227px;-webkit-text-stroke:.22px #262626;transform:scaleY(0.935);transform-origin:0 19px;">Use relative dates</span>
<span class="t" style="left:1005.80px;top:1303.00px;font-size:23px;font-weight:400;color:#262626;letter-spacing:0.123px;-webkit-text-stroke:.22px #262626;transform:scaleY(0.935);transform-origin:0 19px;">Calculate all sizes</span>
<span class="t" style="left:1005.80px;top:1343.00px;font-size:23px;font-weight:400;color:#262626;letter-spacing:0.128px;-webkit-text-stroke:.22px #262626;transform:scaleY(0.935);transform-origin:0 19px;">Show icon preview</span>
<span class="t" style="left:1086.00px;top:1447.00px;font-size:23px;font-weight:400;color:#262626;letter-spacing:0.182px;-webkit-text-stroke:.22px #262626;transform:scaleY(0.935);transform-origin:0 19px;">Use as Defaults</span>
</div>
</body></html>
